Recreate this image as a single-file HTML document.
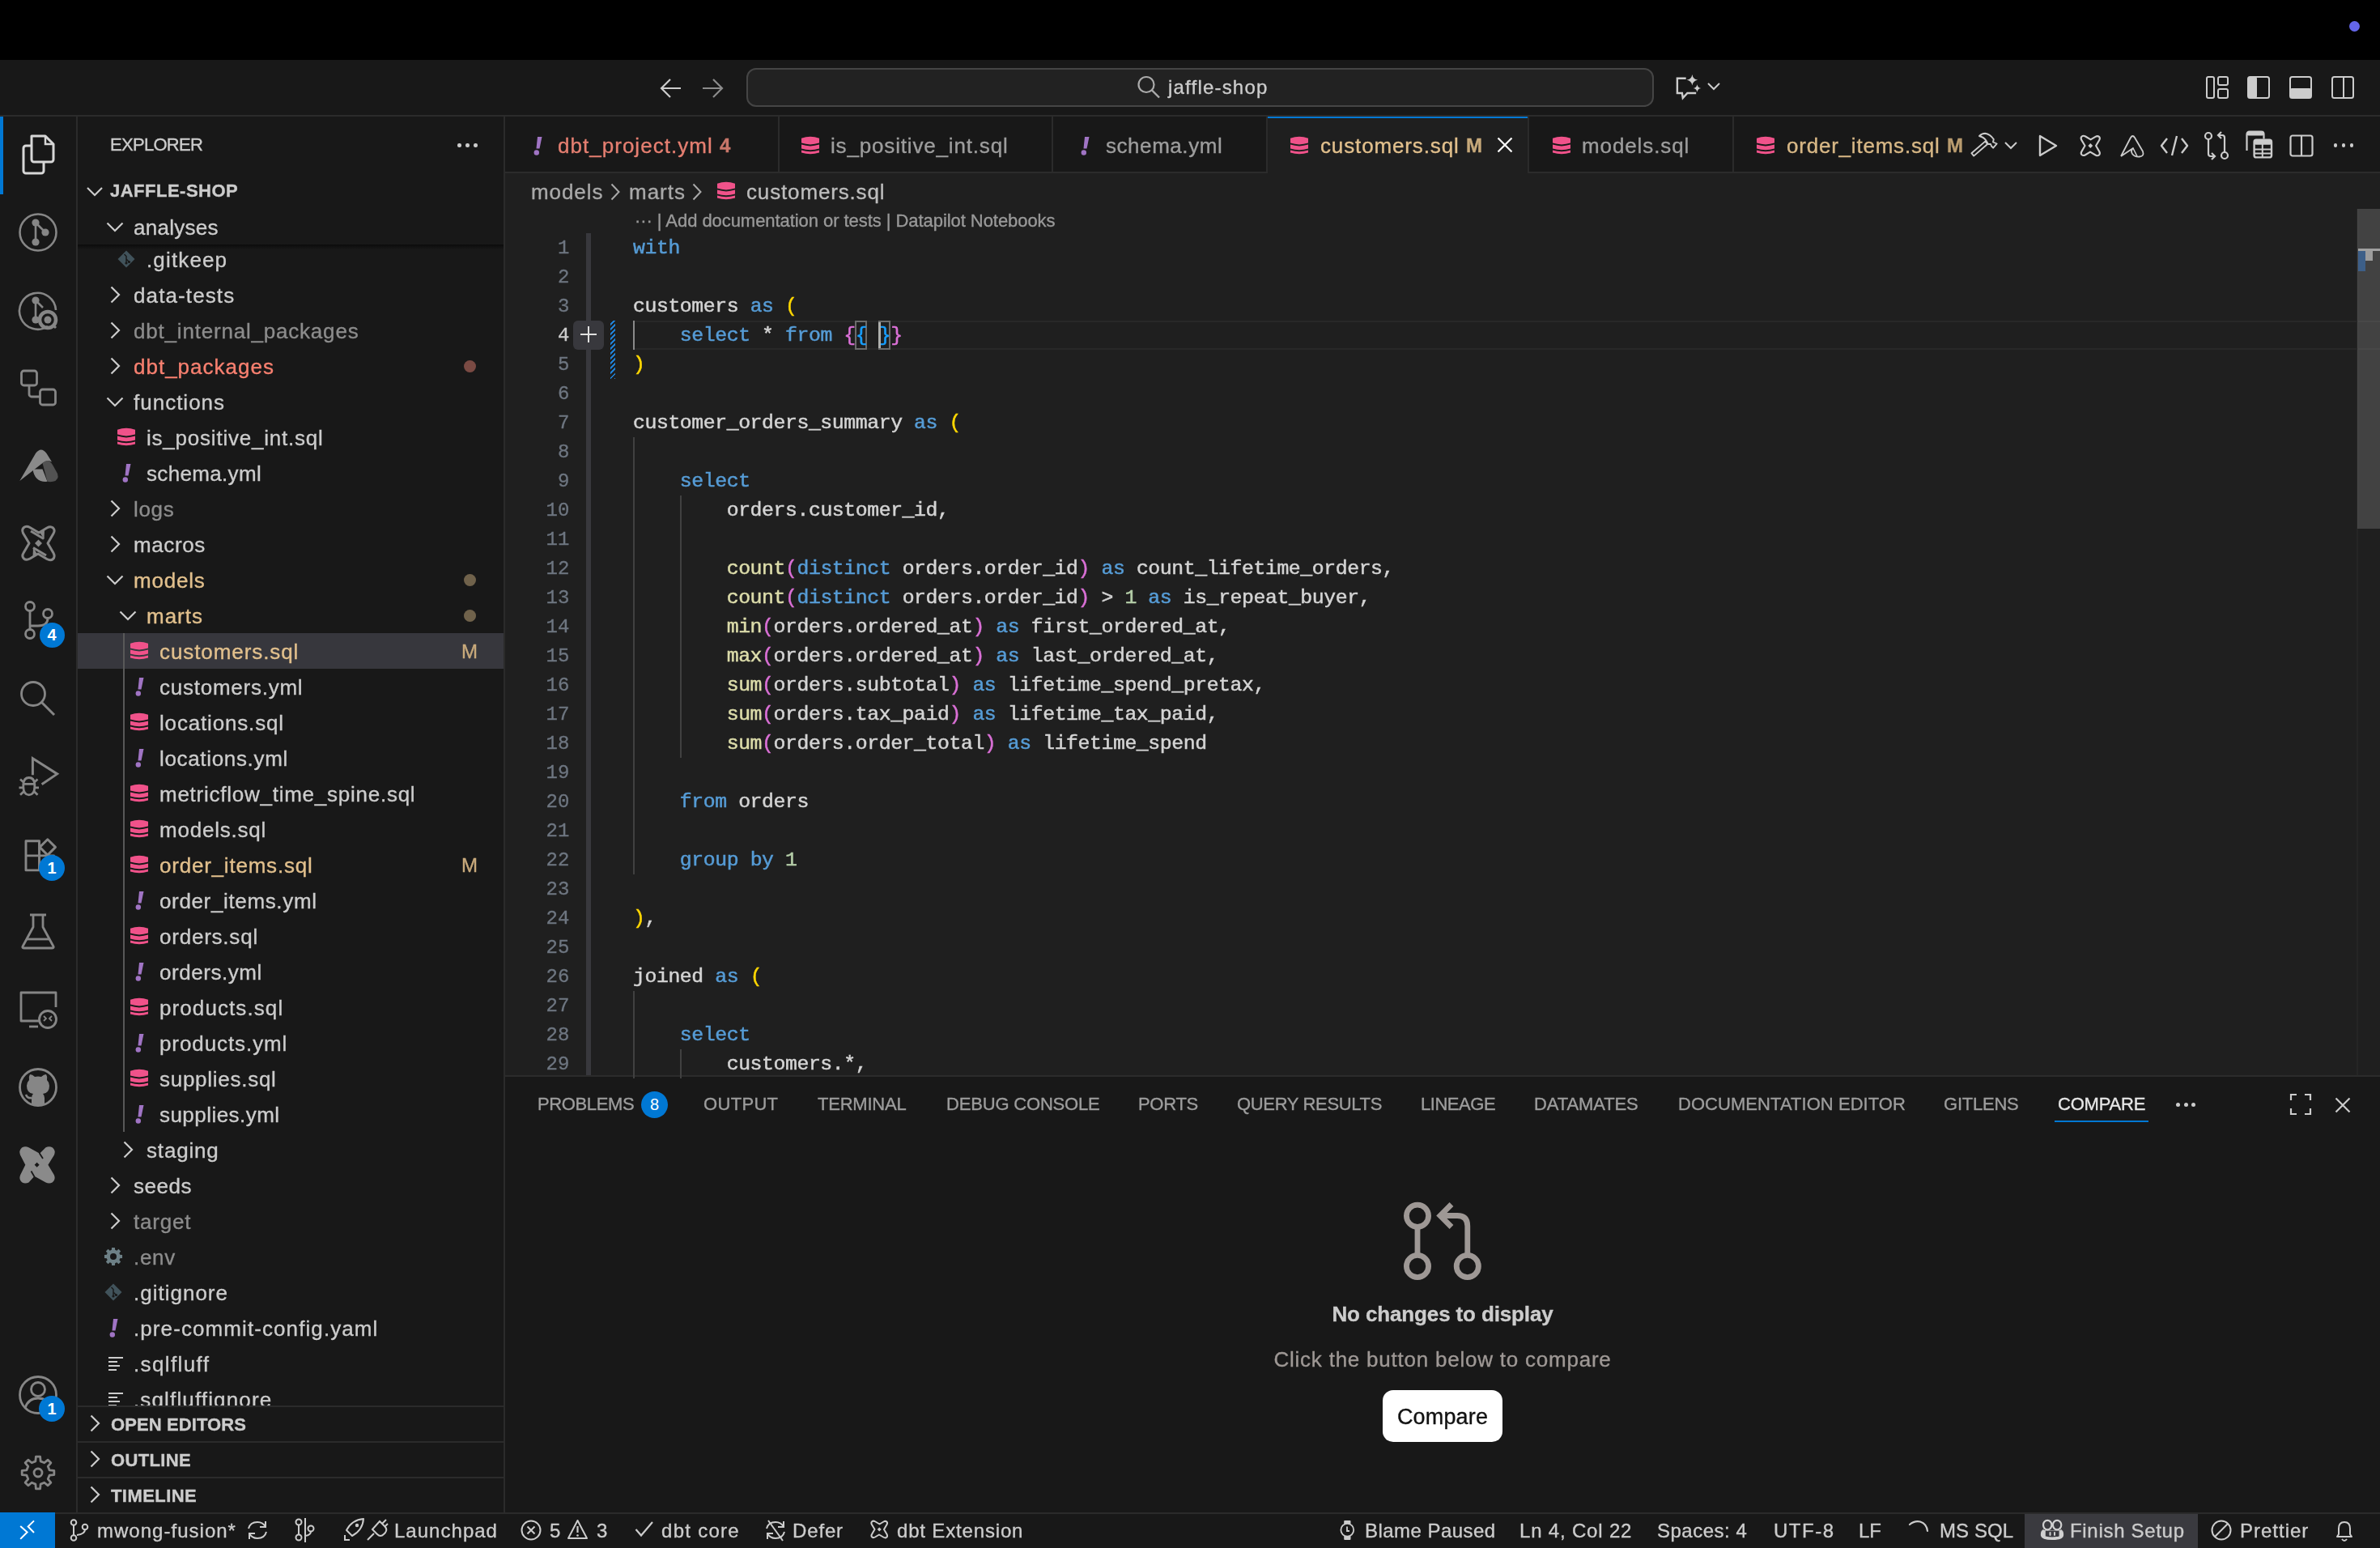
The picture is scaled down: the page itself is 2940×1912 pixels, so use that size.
<!DOCTYPE html>
<html><head><meta charset="utf-8"><style>
html,body{margin:0;padding:0;}
body{width:2940px;height:1912px;overflow:hidden;background:#181818;position:relative;font-family:"Liberation Sans",sans-serif;}
.a{position:absolute;}
.t{white-space:pre;-webkit-text-stroke-width:0.35px;will-change:transform;}
svg{overflow:visible;}
@media (max-width:2200px){html{zoom:0.5;}}
</style></head><body>
<div class="a" style="left:0px;top:0px;width:2940px;height:74px;background:#000000;"></div>
<div class="a" style="left:2901.5px;top:25.5px;width:13px;height:13px;border-radius:50%;background:#6466ea"></div>
<div class="a" style="left:0px;top:74px;width:2940px;height:68px;background:#181818;"></div>
<div class="a" style="left:0px;top:142px;width:2940px;height:2px;background:#2b2b2b;"></div>
<div class="a" style="left:0px;top:144px;width:94px;height:1724px;background:#181818;"></div>
<div class="a" style="left:94px;top:144px;width:2px;height:1724px;background:#2b2b2b;"></div>
<div class="a" style="left:0px;top:144px;width:4px;height:96px;background:#0078d4;"></div>
<div class="a" style="left:96px;top:144px;width:526px;height:1724px;background:#181818;"></div>
<div class="a" style="left:622px;top:144px;width:2px;height:1724px;background:#2b2b2b;"></div>
<div class="a" style="left:624px;top:214px;width:2316px;height:1114px;background:#1f1f1f;"></div>
<div class="a" style="left:624px;top:144px;width:2316px;height:70px;background:#181818;"></div>
<div class="a" style="left:624px;top:212px;width:2316px;height:2px;background:#2b2b2b;"></div>
<div class="a" style="left:624px;top:1328px;width:2316px;height:2px;background:#2b2b2b;"></div>
<div class="a" style="left:624px;top:1330px;width:2316px;height:538px;background:#181818;"></div>
<div class="a" style="left:0px;top:1868px;width:2940px;height:2px;background:#2b2b2b;"></div>
<div class="a" style="left:0px;top:1870px;width:2940px;height:42px;background:#181818;"></div>
<svg class="a" style="left:814px;top:96px;" width="30" height="26" viewBox="0 0 30 26"><path d="M3 13 H27 M14 2 L3 13 L14 24" fill="none" stroke="#cccccc" stroke-width="2.2" stroke-linejoin="miter"/></svg>
<svg class="a" style="left:866px;top:96px;" width="30" height="26" viewBox="0 0 30 26"><path d="M2 13 H26 M15 2 L26 13 L15 24" fill="none" stroke="#8b8b8b" stroke-width="2.2"/></svg>
<div class="a" style="left:922px;top:84px;width:1117px;height:44px;border:2px solid #454545;border-radius:12px;background:#222222"></div>
<svg class="a" style="left:1404px;top:93px;" width="32" height="32" viewBox="0 0 32 32"><circle cx="12" cy="11.5" r="9.5" fill="none" stroke="#ababab" stroke-width="2.2"/><path d="M19 18.5 L28 27.5" stroke="#ababab" stroke-width="2.4"/></svg>
<div id="tc5840b3f" class="a t" style="left:1443px;top:88.00px;font-size:24px;line-height:40px;color:#cccccc;font-weight:normal;letter-spacing:1.200px;font-family:"Liberation Sans",sans-serif;">jaffle-shop</div>
<svg class="a" style="left:2068px;top:90px;" width="36" height="36" viewBox="0 0 36 36"><path d="M14.7 6.8 H3.9 V25 H9.9 L10.8 31 L16.4 25 H27.2" fill="none" stroke="#cccccc" stroke-width="2.4" stroke-linejoin="miter"/><path d="M22.4 2 Q23.3 7.9 29.2 8.8 Q23.3 9.7 22.4 15.6 Q21.5 9.7 15.6 8.8 Q21.5 7.9 22.4 2 Z" fill="#cccccc"/><path d="M28.5 14.2 Q29.1 18.4 33.3 19 Q29.1 19.6 28.5 23.8 Q27.9 19.6 23.7 19 Q27.9 18.4 28.5 14.2 Z" fill="#cccccc"/></svg>
<svg class="a" style="left:2108px;top:101px;" width="18" height="12" viewBox="0 0 18 12"><path d="M2 2 L9 9 L16 2" fill="none" stroke="#cccccc" stroke-width="2"/></svg>
<svg class="a" style="left:2725px;top:94px;" width="28" height="28" viewBox="0 0 28 28"><rect x="1" y="1" width="9" height="26" rx="2" fill="none" stroke="#cccccc" stroke-width="2"/><rect x="15" y="1" width="12" height="10" rx="2" fill="none" stroke="#cccccc" stroke-width="2"/><rect x="15" y="16" width="12" height="11" rx="2" fill="none" stroke="#cccccc" stroke-width="2"/></svg>
<svg class="a" style="left:2776px;top:94px;" width="28" height="28" viewBox="0 0 28 28"><rect x="1" y="1" width="26" height="26" rx="2.5" fill="none" stroke="#cccccc" stroke-width="2"/><rect x="1" y="1" width="11" height="26" rx="2" fill="#cccccc"/></svg>
<svg class="a" style="left:2828px;top:94px;" width="28" height="28" viewBox="0 0 28 28"><rect x="1" y="1" width="26" height="26" rx="2.5" fill="none" stroke="#cccccc" stroke-width="2"/><rect x="1" y="15" width="26" height="12" rx="2" fill="#cccccc"/></svg>
<svg class="a" style="left:2880px;top:94px;" width="28" height="28" viewBox="0 0 28 28"><rect x="1" y="1" width="26" height="26" rx="2.5" fill="none" stroke="#cccccc" stroke-width="2"/><path d="M15 1 V27" stroke="#cccccc" stroke-width="2"/></svg>
<svg class="a" style="left:19px;top:163px;" width="56" height="56" viewBox="0 0 56 56"><path d="M20 5 H37 L47 15 V34 A3 3 0 0 1 44 37 H23 A3 3 0 0 1 20 34 Z" fill="none" stroke="#d7d7d7" stroke-width="3" stroke-linejoin="round"/><path d="M37 5 V15 H47" fill="none" stroke="#d7d7d7" stroke-width="2.5"/><path d="M20 17 H13 A3 3 0 0 0 10 20 V48 A3 3 0 0 0 13 51 H32 A3 3 0 0 0 35 48 V37" fill="none" stroke="#d7d7d7" stroke-width="3" stroke-linejoin="round"/></svg>
<svg class="a" style="left:19px;top:259px;" width="56" height="56" viewBox="0 0 56 56"><circle cx="28" cy="28" r="22.5" fill="none" stroke="#868686" stroke-width="2.6"/><path d="M25 16 V40 M25 16 L37 28" stroke="#868686" stroke-width="2.6"/><circle cx="25" cy="16" r="4.6" fill="#868686"/><circle cx="37" cy="28" r="4.6" fill="#868686"/><circle cx="25" cy="40" r="4.6" fill="#868686"/></svg>
<svg class="a" style="left:19px;top:355px;" width="56" height="56" viewBox="0 0 56 56"><path d="M40 48 A22.5 22.5 0 1 1 50 28" fill="none" stroke="#868686" stroke-width="2.6"/><path d="M25 16 V40 M25 16 L34 25" stroke="#868686" stroke-width="2.6"/><circle cx="25" cy="16" r="4.6" fill="#868686"/><circle cx="25" cy="40" r="4.6" fill="#868686"/><circle cx="40" cy="40" r="10" fill="none" stroke="#868686" stroke-width="4.5"/><circle cx="40" cy="40" r="4.5" fill="#868686"/><path d="M46 46 L50 50" stroke="#868686" stroke-width="3"/></svg>
<svg class="a" style="left:19px;top:451px;" width="56" height="56" viewBox="0 0 56 56"><rect x="7.5" y="7" width="19" height="18" rx="3" fill="none" stroke="#868686" stroke-width="2.8"/><rect x="30.5" y="30" width="19" height="19" rx="3" fill="none" stroke="#868686" stroke-width="2.8"/><path d="M17 25 V36 A3 3 0 0 0 20 39 H30.5" fill="none" stroke="#868686" stroke-width="2.8"/></svg>
<svg class="a" style="left:19px;top:547px;" width="56" height="56" viewBox="0 0 56 56"><path d="M5.3 47 L25 13 Q31.7 4 38.5 13 L45 23.5 Q39 20.5 33.5 25 Z" fill="#8a8a8a"/><path d="M21.5 32.5 H33.5 L39.5 47.8 Q31 48.5 26.5 44 Q22.5 40 21.5 32.5 Z" fill="#8a8a8a"/><path d="M33.5 25 Q38 20.5 42.5 23 Q44.5 24.5 46.5 28 L52 38 Q54.5 46 46.5 47.8 Q43 48.5 39.5 47.8 Z" fill="#525252"/></svg>
<svg class="a" style="left:19px;top:643px;" width="56" height="56" viewBox="0 0 56 56"><path d="M17 28 L9.5 15.5 Q7.5 11 10.5 8.5 Q13.5 6 18 8.5 L29 15 L39 9 Q43.5 6.5 46.5 9 Q49.5 12 47 16 L40 28 L47 40 Q49.5 44.5 46.5 47.5 Q43.5 50 39 47.5 L28 41 L18 47 Q13.5 49.5 10.5 47 Q7.5 44 10 40 Z" fill="none" stroke="#868686" stroke-width="3" stroke-linejoin="round"/><path d="M19 13 L35 22.5" stroke="#868686" stroke-width="3"/><path d="M30 14.5 L36 11.5 L35.5 23 Z" fill="#868686"/><path d="M22 33.5 L38 43" stroke="#868686" stroke-width="3"/><path d="M22 33 L21.5 44.5 L27 41.5 Z" fill="#868686"/><path d="M28.5 23.5 L33 28 L28.5 32.5 L24 28 Z" fill="#868686"/></svg>
<svg class="a" style="left:19px;top:739px;" width="56" height="56" viewBox="0 0 56 56"><circle cx="18" cy="10" r="5.5" fill="none" stroke="#868686" stroke-width="2.8"/><circle cx="18" cy="44" r="5.5" fill="none" stroke="#868686" stroke-width="2.8"/><circle cx="40" cy="19" r="5.5" fill="none" stroke="#868686" stroke-width="2.8"/><path d="M18 15.5 V38.5 M40 24.5 Q40 34 28 34 H18" fill="none" stroke="#868686" stroke-width="2.8"/></svg>
<div class="a" style="left:48.5px;top:768.5px;width:31px;height:31px;border-radius:50%;background:#0078d4;color:#fff;font:bold 20px/31px 'Liberation Sans',sans-serif;text-align:center">4</div>
<svg class="a" style="left:19px;top:835px;" width="56" height="56" viewBox="0 0 56 56"><circle cx="22" cy="22" r="14.5" fill="none" stroke="#868686" stroke-width="2.8"/><path d="M32.5 32.5 L48 48" stroke="#868686" stroke-width="3"/></svg>
<svg class="a" style="left:19px;top:931px;" width="56" height="56" viewBox="0 0 56 56"><path d="M32.6 37.7 L51.6 24.9 L21.4 5.7 V26.2" fill="none" stroke="#868686" stroke-width="3"/><path d="M9.8 37.5 Q10.5 29.5 16.8 29.5 Q23.1 29.5 23.8 37.5 V41 Q23.5 50.8 16.8 50.8 Q10.1 50.8 9.8 41 Z M9.8 37.3 H23.8" fill="none" stroke="#868686" stroke-width="2.8" stroke-linejoin="round"/><path d="M4.5 41.9 H9.6 M24 41.9 H29 M10.5 35.5 L6 31.5 M23 35.5 L27.5 31.5 M10.5 46.5 L6 50.8 M23 46.5 L27.5 50.8" stroke="#868686" stroke-width="2.8"/></svg>
<svg class="a" style="left:19px;top:1027px;" width="56" height="56" viewBox="0 0 56 56"><path d="M13 11.7 H29.5 V47.9 H13 Z M13 29.9 H47.5 V47.9 H29.5" fill="none" stroke="#868686" stroke-width="2.9" stroke-linejoin="round"/><path d="M39.8 9.7 L49.5 19.4 L39.8 29.1 L30.1 19.4 Z" fill="none" stroke="#868686" stroke-width="2.9" stroke-linejoin="round"/></svg>
<div class="a" style="left:48px;top:1056px;width:32px;height:32px;border-radius:50%;background:#0078d4;color:#fff;font:bold 20px/32px 'Liberation Sans',sans-serif;text-align:center">1</div>
<svg class="a" style="left:19px;top:1123px;" width="56" height="56" viewBox="0 0 56 56"><path d="M18 7 H38 M22 7 V22 L9 46 Q8 48 11 48 H45 Q48 48 47 46 L34 22 V7" fill="none" stroke="#868686" stroke-width="2.8" stroke-linejoin="round"/><path d="M14 37 H42" stroke="#868686" stroke-width="2.8"/></svg>
<svg class="a" style="left:19px;top:1219px;" width="56" height="56" viewBox="0 0 56 56"><path d="M30 42 H7 V7 H50 V25" fill="none" stroke="#868686" stroke-width="2.8" stroke-linejoin="round"/><path d="M17 49 H28" stroke="#868686" stroke-width="2.8"/><circle cx="40" cy="40" r="10.5" fill="none" stroke="#868686" stroke-width="2.8"/><path d="M35 36 L38 39 L35 42 M45 36 L42 39 L45 42" fill="none" stroke="#868686" stroke-width="1.8"/></svg>
<svg class="a" style="left:19px;top:1315px;" width="56" height="56" viewBox="0 0 56 56"><circle cx="28" cy="28" r="22.5" fill="none" stroke="#868686" stroke-width="2.8"/><path d="M20 49 V41 Q20 38 22 36 Q14 35 14 26 Q14 22 17 19 Q16 15 18 12 Q21 12 24 15 Q28 14 32 15 Q35 12 38 12 Q40 15 39 19 Q42 22 42 26 Q42 35 34 36 Q36 38 36 41 V49 Z" fill="#868686"/><path d="M20 41 Q15 42 13 37" fill="none" stroke="#868686" stroke-width="2.6"/></svg>
<svg class="a" style="left:19px;top:1411px;" width="56" height="56" viewBox="0 0 56 56"><path d="M12.3 27.8 L6 15.5 Q4 10 8 6.5 Q12 4 16.5 6.2 L30 13.8 L37.5 6.2 Q42 4 46 6.5 Q50 10 48 15.5 L40.4 27.8 L48 40.5 Q50 46 46 49.2 Q42 51.8 37.5 49.5 L23.5 41.8 L16.5 49.5 Q12 51.8 8 49.2 Q4 46 6 40.5 Z" fill="#8a8a8a"/><path d="M29.5 13 L34 20 M23.5 42.5 L19.5 35.5" stroke="#181818" stroke-width="1.8"/><path d="M26.6 24.8 L29.6 27.8 L26.6 30.8 L23.6 27.8 Z" fill="#181818"/></svg>
<svg class="a" style="left:19px;top:1695px;" width="56" height="56" viewBox="0 0 56 56"><circle cx="28" cy="28" r="22.5" fill="none" stroke="#868686" stroke-width="2.8"/><circle cx="28" cy="21" r="8.5" fill="none" stroke="#868686" stroke-width="2.8"/><path d="M12 44 Q16 32 28 32 Q40 32 44 44" fill="none" stroke="#868686" stroke-width="2.8"/></svg>
<div class="a" style="left:48px;top:1724px;width:32px;height:32px;border-radius:50%;background:#0078d4;color:#fff;font:bold 20px/32px 'Liberation Sans',sans-serif;text-align:center">1</div>
<svg class="a" style="left:19px;top:1791px;" width="56" height="56" viewBox="0 0 56 56"><path d="M42.15 24.84 L47.83 25.41 L47.83 30.59 L42.15 31.16 L40.24 35.77 L43.86 40.19 L40.19 43.86 L35.77 40.24 L31.16 42.15 L30.59 47.83 L25.41 47.83 L24.84 42.15 L20.23 40.24 L15.81 43.86 L12.14 40.19 L15.76 35.77 L13.85 31.16 L8.17 30.59 L8.17 25.41 L13.85 24.84 L15.76 20.23 L12.14 15.81 L15.81 12.14 L20.23 15.76 L24.84 13.85 L25.41 8.17 L30.59 8.17 L31.16 13.85 L35.77 15.76 L40.19 12.14 L43.86 15.81 L40.24 20.23 Z" fill="none" stroke="#868686" stroke-width="2.8" stroke-linejoin="round"/><circle cx="28" cy="28" r="5" fill="none" stroke="#868686" stroke-width="2.8"/></svg>
<div id="t4f3b7752" class="a t" style="left:136px;top:159.00px;font-size:22px;line-height:40px;color:#cccccc;font-weight:normal;letter-spacing:-0.714px;font-family:"Liberation Sans",sans-serif;">EXPLORER</div>
<div class="a" style="left:565px;top:177px;width:4.5px;height:4.5px;border-radius:50%;background:#cccccc"></div>
<div class="a" style="left:575px;top:177px;width:4.5px;height:4.5px;border-radius:50%;background:#cccccc"></div>
<div class="a" style="left:585px;top:177px;width:4.5px;height:4.5px;border-radius:50%;background:#cccccc"></div>
<svg class="a" style="left:106px;top:230px;" width="22" height="14" viewBox="0 0 22 14"><path d="M2 2 L11 11 L20 2" fill="none" stroke="#cccccc" stroke-width="2.2"/></svg>
<div id="tdb640ee2" class="a t" style="left:136px;top:216.00px;font-size:22px;line-height:40px;color:#cccccc;font-weight:bold;letter-spacing:0.500px;font-family:"Liberation Sans",sans-serif;">JAFFLE-SHOP</div>
<div class="a" style="left:96px;top:258px;width:526px;height:44px;background:#181818;"></div>
<div class="a" style="left:96px;top:782px;width:526px;height:44px;background:#37373d;"></div>
<div class="a" style="left:152px;top:782px;width:2px;height:616px;background:#585858;"></div>
<svg class="a" style="left:145px;top:309px;" width="22" height="22" viewBox="0 0 22 22"><path d="M11 0.5 L21.5 11 L11 21.5 L0.5 11 Z" fill="#41535b"/><path d="M8.5 5 L11 7.5 V16 M11 11 L14.5 14.5" stroke="#181818" stroke-width="1.4" fill="none"/><circle cx="11" cy="16" r="1.6" fill="#181818"/><circle cx="14.5" cy="14.5" r="1.6" fill="#181818"/></svg>
<div id="t702730bd" class="a t" style="left:181px;top:299.00px;font-size:26px;line-height:44px;color:#cccccc;font-weight:normal;letter-spacing:1.143px;font-family:"Liberation Sans",sans-serif;">.gitkeep</div>
<svg class="a" style="left:135px;top:353px;" width="14" height="22" viewBox="0 0 14 22"><path d="M2.5 1.5 L12 11 L2.5 20.5" fill="none" stroke="#cccccc" stroke-width="2.2"/></svg>
<div id="te911ee15" class="a t" style="left:164.6px;top:343.00px;font-size:26px;line-height:44px;color:#cccccc;font-weight:normal;letter-spacing:1.111px;font-family:"Liberation Sans",sans-serif;">data-tests</div>
<svg class="a" style="left:135px;top:397px;" width="14" height="22" viewBox="0 0 14 22"><path d="M2.5 1.5 L12 11 L2.5 20.5" fill="none" stroke="#cccccc" stroke-width="2.2"/></svg>
<div id="t50dd4df8" class="a t" style="left:164.6px;top:387.00px;font-size:26px;line-height:44px;color:#8c8c8c;font-weight:normal;letter-spacing:0.800px;font-family:"Liberation Sans",sans-serif;">dbt_internal_packages</div>
<svg class="a" style="left:135px;top:441px;" width="14" height="22" viewBox="0 0 14 22"><path d="M2.5 1.5 L12 11 L2.5 20.5" fill="none" stroke="#cccccc" stroke-width="2.2"/></svg>
<div id="t209a0e7f" class="a t" style="left:164.6px;top:431.00px;font-size:26px;line-height:44px;color:#f88070;font-weight:normal;letter-spacing:1.000px;font-family:"Liberation Sans",sans-serif;">dbt_packages</div>
<div class="a" style="left:572.5px;top:444.5px;width:15px;height:15px;border-radius:50%;background:#7a4a43"></div>
<svg class="a" style="left:131px;top:489px;" width="22" height="14" viewBox="0 0 22 14"><path d="M1.5 2.5 L11 12 L20.5 2.5" fill="none" stroke="#cccccc" stroke-width="2.2"/></svg>
<div id="t82731efe" class="a t" style="left:164.6px;top:475.00px;font-size:26px;line-height:44px;color:#cccccc;font-weight:normal;letter-spacing:1.000px;font-family:"Liberation Sans",sans-serif;">functions</div>
<svg class="a" style="left:145px;top:528px;" width="22" height="24" viewBox="0 0 22 24"><g fill="#f0528a"><path d="M0 2.8 Q11 -1.2 22 2.8 V8.6 Q11 12.2 0 8.6 Z"/><path d="M0 10.6 Q11 14.2 22 10.6 V15.4 Q11 19 0 15.4 Z"/><path d="M0 17.4 Q11 21 22 17.4 V20.6 Q11 24 0 20.6 Z"/></g></svg>
<div id="ta8964c74" class="a t" style="left:180.6px;top:519.00px;font-size:26px;line-height:44px;color:#cccccc;font-weight:normal;letter-spacing:0.779px;font-family:"Liberation Sans",sans-serif;">is_positive_int.sql</div>
<svg class="a" style="left:150px;top:572px;" width="12" height="24" viewBox="0 0 12 24"><path d="M6 1 H11.5 L8.5 15.5 H4.5 Z" fill="#a074c4"/><circle cx="4.8" cy="20.5" r="3.2" fill="#a074c4"/></svg>
<div id="tdbcc5fa7" class="a t" style="left:180.6px;top:563.00px;font-size:26px;line-height:44px;color:#cccccc;font-weight:normal;letter-spacing:0.335px;font-family:"Liberation Sans",sans-serif;">schema.yml</div>
<svg class="a" style="left:135px;top:617px;" width="14" height="22" viewBox="0 0 14 22"><path d="M2.5 1.5 L12 11 L2.5 20.5" fill="none" stroke="#cccccc" stroke-width="2.2"/></svg>
<div id="t31d4ef1e" class="a t" style="left:164.6px;top:607.00px;font-size:26px;line-height:44px;color:#8c8c8c;font-weight:normal;letter-spacing:0.668px;font-family:"Liberation Sans",sans-serif;">logs</div>
<svg class="a" style="left:135px;top:661px;" width="14" height="22" viewBox="0 0 14 22"><path d="M2.5 1.5 L12 11 L2.5 20.5" fill="none" stroke="#cccccc" stroke-width="2.2"/></svg>
<div id="t34041583" class="a t" style="left:164.6px;top:651.00px;font-size:26px;line-height:44px;color:#cccccc;font-weight:normal;letter-spacing:0.600px;font-family:"Liberation Sans",sans-serif;">macros</div>
<svg class="a" style="left:131px;top:709px;" width="22" height="14" viewBox="0 0 22 14"><path d="M1.5 2.5 L11 12 L20.5 2.5" fill="none" stroke="#cccccc" stroke-width="2.2"/></svg>
<div id="tb1e614e0" class="a t" style="left:164.6px;top:695.00px;font-size:26px;line-height:44px;color:#e2c08d;font-weight:normal;letter-spacing:0.800px;font-family:"Liberation Sans",sans-serif;">models</div>
<div class="a" style="left:572.5px;top:708.5px;width:15px;height:15px;border-radius:50%;background:#70624b"></div>
<svg class="a" style="left:147px;top:753px;" width="22" height="14" viewBox="0 0 22 14"><path d="M1.5 2.5 L11 12 L20.5 2.5" fill="none" stroke="#cccccc" stroke-width="2.2"/></svg>
<div id="tbe3b2e84" class="a t" style="left:180.6px;top:739.00px;font-size:26px;line-height:44px;color:#e2c08d;font-weight:normal;letter-spacing:1.000px;font-family:"Liberation Sans",sans-serif;">marts</div>
<div class="a" style="left:572.5px;top:752.5px;width:15px;height:15px;border-radius:50%;background:#70624b"></div>
<svg class="a" style="left:161px;top:792px;" width="22" height="24" viewBox="0 0 22 24"><g fill="#f0528a"><path d="M0 2.8 Q11 -1.2 22 2.8 V8.6 Q11 12.2 0 8.6 Z"/><path d="M0 10.6 Q11 14.2 22 10.6 V15.4 Q11 19 0 15.4 Z"/><path d="M0 17.4 Q11 21 22 17.4 V20.6 Q11 24 0 20.6 Z"/></g></svg>
<div id="t6036e098" class="a t" style="left:196.6px;top:783.00px;font-size:26px;line-height:44px;color:#e2c08d;font-weight:normal;letter-spacing:0.916px;font-family:"Liberation Sans",sans-serif;">customers.sql</div>
<div id="tbe29cebc" class="a t" style="left:570px;top:783.00px;font-size:24px;line-height:44px;color:#c9aa7c;font-weight:normal;letter-spacing:0.000px;font-family:"Liberation Sans",sans-serif;">M</div>
<svg class="a" style="left:166px;top:836px;" width="12" height="24" viewBox="0 0 12 24"><path d="M6 1 H11.5 L8.5 15.5 H4.5 Z" fill="#a074c4"/><circle cx="4.8" cy="20.5" r="3.2" fill="#a074c4"/></svg>
<div id="t1f41c439" class="a t" style="left:196.6px;top:827.00px;font-size:26px;line-height:44px;color:#cccccc;font-weight:normal;letter-spacing:0.750px;font-family:"Liberation Sans",sans-serif;">customers.yml</div>
<svg class="a" style="left:161px;top:880px;" width="22" height="24" viewBox="0 0 22 24"><g fill="#f0528a"><path d="M0 2.8 Q11 -1.2 22 2.8 V8.6 Q11 12.2 0 8.6 Z"/><path d="M0 10.6 Q11 14.2 22 10.6 V15.4 Q11 19 0 15.4 Z"/><path d="M0 17.4 Q11 21 22 17.4 V20.6 Q11 24 0 20.6 Z"/></g></svg>
<div id="t8bfe27b3" class="a t" style="left:196.6px;top:871.00px;font-size:26px;line-height:44px;color:#cccccc;font-weight:normal;letter-spacing:0.833px;font-family:"Liberation Sans",sans-serif;">locations.sql</div>
<svg class="a" style="left:166px;top:924px;" width="12" height="24" viewBox="0 0 12 24"><path d="M6 1 H11.5 L8.5 15.5 H4.5 Z" fill="#a074c4"/><circle cx="4.8" cy="20.5" r="3.2" fill="#a074c4"/></svg>
<div id="t028ab29e" class="a t" style="left:196.6px;top:915.00px;font-size:26px;line-height:44px;color:#cccccc;font-weight:normal;letter-spacing:0.667px;font-family:"Liberation Sans",sans-serif;">locations.yml</div>
<svg class="a" style="left:161px;top:968px;" width="22" height="24" viewBox="0 0 22 24"><g fill="#f0528a"><path d="M0 2.8 Q11 -1.2 22 2.8 V8.6 Q11 12.2 0 8.6 Z"/><path d="M0 10.6 Q11 14.2 22 10.6 V15.4 Q11 19 0 15.4 Z"/><path d="M0 17.4 Q11 21 22 17.4 V20.6 Q11 24 0 20.6 Z"/></g></svg>
<div id="t3fa2ac2e" class="a t" style="left:196.6px;top:959.00px;font-size:26px;line-height:44px;color:#cccccc;font-weight:normal;letter-spacing:0.749px;font-family:"Liberation Sans",sans-serif;">metricflow_time_spine.sql</div>
<svg class="a" style="left:161px;top:1012px;" width="22" height="24" viewBox="0 0 22 24"><g fill="#f0528a"><path d="M0 2.8 Q11 -1.2 22 2.8 V8.6 Q11 12.2 0 8.6 Z"/><path d="M0 10.6 Q11 14.2 22 10.6 V15.4 Q11 19 0 15.4 Z"/><path d="M0 17.4 Q11 21 22 17.4 V20.6 Q11 24 0 20.6 Z"/></g></svg>
<div id="t4dce6d8a" class="a t" style="left:196.6px;top:1003.00px;font-size:26px;line-height:44px;color:#cccccc;font-weight:normal;letter-spacing:0.775px;font-family:"Liberation Sans",sans-serif;">models.sql</div>
<svg class="a" style="left:161px;top:1056px;" width="22" height="24" viewBox="0 0 22 24"><g fill="#f0528a"><path d="M0 2.8 Q11 -1.2 22 2.8 V8.6 Q11 12.2 0 8.6 Z"/><path d="M0 10.6 Q11 14.2 22 10.6 V15.4 Q11 19 0 15.4 Z"/><path d="M0 17.4 Q11 21 22 17.4 V20.6 Q11 24 0 20.6 Z"/></g></svg>
<div id="t51ba3015" class="a t" style="left:196.6px;top:1047.00px;font-size:26px;line-height:44px;color:#e2c08d;font-weight:normal;letter-spacing:0.784px;font-family:"Liberation Sans",sans-serif;">order_items.sql</div>
<div id="t0de13d81" class="a t" style="left:570px;top:1047.00px;font-size:24px;line-height:44px;color:#c9aa7c;font-weight:normal;letter-spacing:0.000px;font-family:"Liberation Sans",sans-serif;">M</div>
<svg class="a" style="left:166px;top:1100px;" width="12" height="24" viewBox="0 0 12 24"><path d="M6 1 H11.5 L8.5 15.5 H4.5 Z" fill="#a074c4"/><circle cx="4.8" cy="20.5" r="3.2" fill="#a074c4"/></svg>
<div id="tdb74f6c2" class="a t" style="left:196.6px;top:1091.00px;font-size:26px;line-height:44px;color:#cccccc;font-weight:normal;letter-spacing:0.645px;font-family:"Liberation Sans",sans-serif;">order_items.yml</div>
<svg class="a" style="left:161px;top:1144px;" width="22" height="24" viewBox="0 0 22 24"><g fill="#f0528a"><path d="M0 2.8 Q11 -1.2 22 2.8 V8.6 Q11 12.2 0 8.6 Z"/><path d="M0 10.6 Q11 14.2 22 10.6 V15.4 Q11 19 0 15.4 Z"/><path d="M0 17.4 Q11 21 22 17.4 V20.6 Q11 24 0 20.6 Z"/></g></svg>
<div id="t03d37e71" class="a t" style="left:196.6px;top:1135.00px;font-size:26px;line-height:44px;color:#cccccc;font-weight:normal;letter-spacing:0.779px;font-family:"Liberation Sans",sans-serif;">orders.sql</div>
<svg class="a" style="left:166px;top:1188px;" width="12" height="24" viewBox="0 0 12 24"><path d="M6 1 H11.5 L8.5 15.5 H4.5 Z" fill="#a074c4"/><circle cx="4.8" cy="20.5" r="3.2" fill="#a074c4"/></svg>
<div id="tb0c20f5b" class="a t" style="left:196.6px;top:1179.00px;font-size:26px;line-height:44px;color:#cccccc;font-weight:normal;letter-spacing:0.555px;font-family:"Liberation Sans",sans-serif;">orders.yml</div>
<svg class="a" style="left:161px;top:1232px;" width="22" height="24" viewBox="0 0 22 24"><g fill="#f0528a"><path d="M0 2.8 Q11 -1.2 22 2.8 V8.6 Q11 12.2 0 8.6 Z"/><path d="M0 10.6 Q11 14.2 22 10.6 V15.4 Q11 19 0 15.4 Z"/><path d="M0 17.4 Q11 21 22 17.4 V20.6 Q11 24 0 20.6 Z"/></g></svg>
<div id="ta683495a" class="a t" style="left:196.6px;top:1223.00px;font-size:26px;line-height:44px;color:#cccccc;font-weight:normal;letter-spacing:1.090px;font-family:"Liberation Sans",sans-serif;">products.sql</div>
<svg class="a" style="left:166px;top:1276px;" width="12" height="24" viewBox="0 0 12 24"><path d="M6 1 H11.5 L8.5 15.5 H4.5 Z" fill="#a074c4"/><circle cx="4.8" cy="20.5" r="3.2" fill="#a074c4"/></svg>
<div id="tedf8ff96" class="a t" style="left:196.6px;top:1267.00px;font-size:26px;line-height:44px;color:#cccccc;font-weight:normal;letter-spacing:0.909px;font-family:"Liberation Sans",sans-serif;">products.yml</div>
<svg class="a" style="left:161px;top:1320px;" width="22" height="24" viewBox="0 0 22 24"><g fill="#f0528a"><path d="M0 2.8 Q11 -1.2 22 2.8 V8.6 Q11 12.2 0 8.6 Z"/><path d="M0 10.6 Q11 14.2 22 10.6 V15.4 Q11 19 0 15.4 Z"/><path d="M0 17.4 Q11 21 22 17.4 V20.6 Q11 24 0 20.6 Z"/></g></svg>
<div id="tc23c874a" class="a t" style="left:196.6px;top:1311.00px;font-size:26px;line-height:44px;color:#cccccc;font-weight:normal;letter-spacing:0.727px;font-family:"Liberation Sans",sans-serif;">supplies.sql</div>
<svg class="a" style="left:166px;top:1364px;" width="12" height="24" viewBox="0 0 12 24"><path d="M6 1 H11.5 L8.5 15.5 H4.5 Z" fill="#a074c4"/><circle cx="4.8" cy="20.5" r="3.2" fill="#a074c4"/></svg>
<div id="t0376e6ad" class="a t" style="left:196.6px;top:1355.00px;font-size:26px;line-height:44px;color:#cccccc;font-weight:normal;letter-spacing:0.454px;font-family:"Liberation Sans",sans-serif;">supplies.yml</div>
<svg class="a" style="left:151px;top:1409px;" width="14" height="22" viewBox="0 0 14 22"><path d="M2.5 1.5 L12 11 L2.5 20.5" fill="none" stroke="#cccccc" stroke-width="2.2"/></svg>
<div id="t31a6ada5" class="a t" style="left:180.6px;top:1399.00px;font-size:26px;line-height:44px;color:#cccccc;font-weight:normal;letter-spacing:0.831px;font-family:"Liberation Sans",sans-serif;">staging</div>
<svg class="a" style="left:135px;top:1453px;" width="14" height="22" viewBox="0 0 14 22"><path d="M2.5 1.5 L12 11 L2.5 20.5" fill="none" stroke="#cccccc" stroke-width="2.2"/></svg>
<div id="te734d14f" class="a t" style="left:164.6px;top:1443.00px;font-size:26px;line-height:44px;color:#cccccc;font-weight:normal;letter-spacing:0.500px;font-family:"Liberation Sans",sans-serif;">seeds</div>
<svg class="a" style="left:135px;top:1497px;" width="14" height="22" viewBox="0 0 14 22"><path d="M2.5 1.5 L12 11 L2.5 20.5" fill="none" stroke="#cccccc" stroke-width="2.2"/></svg>
<div id="t96a90f75" class="a t" style="left:164.6px;top:1487.00px;font-size:26px;line-height:44px;color:#8c8c8c;font-weight:normal;letter-spacing:0.800px;font-family:"Liberation Sans",sans-serif;">target</div>
<svg class="a" style="left:129px;top:1541px;" width="22" height="22" viewBox="0 0 22 22"><path d="M19.21 8.81 L22.04 9.11 L22.04 12.89 L19.21 13.19 L18.35 15.26 L20.15 17.47 L17.47 20.15 L15.26 18.35 L13.19 19.21 L12.89 22.04 L9.11 22.04 L8.81 19.21 L6.74 18.35 L4.53 20.15 L1.85 17.47 L3.65 15.26 L2.79 13.19 L-0.04 12.89 L-0.04 9.11 L2.79 8.81 L3.65 6.74 L1.85 4.53 L4.53 1.85 L6.74 3.65 L8.81 2.79 L9.11 -0.04 L12.89 -0.04 L13.19 2.79 L15.26 3.65 L17.47 1.85 L20.15 4.53 L18.35 6.74 Z" fill="#6d8086"/><circle cx="11" cy="11" r="4" fill="#181818"/></svg>
<div id="t1921da4d" class="a t" style="left:164.6px;top:1531.00px;font-size:26px;line-height:44px;color:#8c8c8c;font-weight:normal;letter-spacing:0.666px;font-family:"Liberation Sans",sans-serif;">.env</div>
<svg class="a" style="left:129px;top:1585px;" width="22" height="22" viewBox="0 0 22 22"><path d="M11 0.5 L21.5 11 L11 21.5 L0.5 11 Z" fill="#41535b"/><path d="M8.5 5 L11 7.5 V16 M11 11 L14.5 14.5" stroke="#181818" stroke-width="1.4" fill="none"/><circle cx="11" cy="16" r="1.6" fill="#181818"/><circle cx="14.5" cy="14.5" r="1.6" fill="#181818"/></svg>
<div id="t97ef4156" class="a t" style="left:164.6px;top:1575.00px;font-size:26px;line-height:44px;color:#cccccc;font-weight:normal;letter-spacing:1.002px;font-family:"Liberation Sans",sans-serif;">.gitignore</div>
<svg class="a" style="left:134px;top:1628px;" width="12" height="24" viewBox="0 0 12 24"><path d="M6 1 H11.5 L8.5 15.5 H4.5 Z" fill="#a074c4"/><circle cx="4.8" cy="20.5" r="3.2" fill="#a074c4"/></svg>
<div id="t50bafa56" class="a t" style="left:164.6px;top:1619.00px;font-size:26px;line-height:44px;color:#cccccc;font-weight:normal;letter-spacing:1.090px;font-family:"Liberation Sans",sans-serif;">.pre-commit-config.yaml</div>
<svg class="a" style="left:134px;top:1675px;" width="18" height="18" viewBox="0 0 18 18"><path d="M0 2 H18 M0 7 H11 M0 12 H14 M0 17 H10" stroke="#cccccc" stroke-width="2.2"/></svg>
<div id="te2a67f60" class="a t" style="left:164.6px;top:1663.00px;font-size:26px;line-height:44px;color:#cccccc;font-weight:normal;letter-spacing:1.375px;font-family:"Liberation Sans",sans-serif;">.sqlfluff</div>
<svg class="a" style="left:134px;top:1719px;" width="18" height="18" viewBox="0 0 18 18"><path d="M0 2 H18 M0 7 H11 M0 12 H14 M0 17 H10" stroke="#cccccc" stroke-width="2.2"/></svg>
<div id="t9fc2bc03" class="a t" style="left:164.6px;top:1707.00px;font-size:26px;line-height:44px;color:#cccccc;font-weight:normal;letter-spacing:1.144px;font-family:"Liberation Sans",sans-serif;">.sqlfluffignore</div>
<div class="a" style="left:96px;top:258px;width:526px;height:44px;background:#181818;"></div>
<svg class="a" style="left:131px;top:273px;" width="22" height="14" viewBox="0 0 22 14"><path d="M1.5 2.5 L11 12 L20.5 2.5" fill="none" stroke="#cccccc" stroke-width="2.2"/></svg>
<div id="t511ed27e" class="a t" style="left:164.6px;top:259.00px;font-size:26px;line-height:44px;color:#cccccc;font-weight:normal;letter-spacing:0.284px;font-family:"Liberation Sans",sans-serif;">analyses</div>
<div class="a" style="left:96px;top:302px;width:526px;height:6px;background:linear-gradient(#0b0b0b,rgba(0,0,0,0))"></div>
<div class="a" style="left:96px;top:1736px;width:526px;height:132px;background:#181818;"></div>
<div class="a" style="left:96px;top:1736px;width:526px;height:2px;background:#2b2b2b;"></div>
<svg class="a" style="left:110px;top:1747px;" width="14" height="22" viewBox="0 0 14 22"><path d="M2.5 1.5 L12 11 L2.5 20.5" fill="none" stroke="#cccccc" stroke-width="2.2"/></svg>
<div id="tebcd518b" class="a t" style="left:136.8px;top:1739.50px;font-size:22px;line-height:40px;color:#cccccc;font-weight:bold;letter-spacing:0.094px;font-family:"Liberation Sans",sans-serif;">OPEN EDITORS</div>
<div class="a" style="left:96px;top:1780px;width:526px;height:2px;background:#2b2b2b;"></div>
<svg class="a" style="left:110px;top:1791px;" width="14" height="22" viewBox="0 0 14 22"><path d="M2.5 1.5 L12 11 L2.5 20.5" fill="none" stroke="#cccccc" stroke-width="2.2"/></svg>
<div id="t418241d1" class="a t" style="left:136.8px;top:1783.50px;font-size:22px;line-height:40px;color:#cccccc;font-weight:bold;letter-spacing:0.334px;font-family:"Liberation Sans",sans-serif;">OUTLINE</div>
<div class="a" style="left:96px;top:1824px;width:526px;height:2px;background:#2b2b2b;"></div>
<svg class="a" style="left:110px;top:1835px;" width="14" height="22" viewBox="0 0 14 22"><path d="M2.5 1.5 L12 11 L2.5 20.5" fill="none" stroke="#cccccc" stroke-width="2.2"/></svg>
<div id="t8aeb79b2" class="a t" style="left:136.8px;top:1827.50px;font-size:22px;line-height:40px;color:#cccccc;font-weight:bold;letter-spacing:0.429px;font-family:"Liberation Sans",sans-serif;">TIMELINE</div>
<div class="a" style="left:961px;top:144px;width:2px;height:68px;background:#2b2b2b;"></div>
<svg class="a" style="left:658px;top:168px;" width="12" height="24" viewBox="0 0 12 24"><path d="M6 1 H11.5 L8.5 15.5 H4.5 Z" fill="#a074c4"/><circle cx="4.8" cy="20.5" r="3.2" fill="#a074c4"/></svg>
<div id="t3f812b75" class="a t" style="left:688.6px;top:158.00px;font-size:26px;line-height:44px;color:#e57f71;font-weight:normal;letter-spacing:1.027px;font-family:"Liberation Sans",sans-serif;">dbt_project.yml</div>
<div id="tcea2a482" class="a t" style="left:888.7px;top:158.00px;font-size:24px;line-height:44px;color:#c8766a;font-weight:bold;letter-spacing:0.000px;font-family:"Liberation Sans",sans-serif;-webkit-text-stroke-width:0.2px;">4</div>
<div class="a" style="left:1299px;top:144px;width:2px;height:68px;background:#2b2b2b;"></div>
<svg class="a" style="left:990px;top:168px;" width="22" height="24" viewBox="0 0 22 24"><g fill="#f0528a"><path d="M0 2.8 Q11 -1.2 22 2.8 V8.6 Q11 12.2 0 8.6 Z"/><path d="M0 10.6 Q11 14.2 22 10.6 V15.4 Q11 19 0 15.4 Z"/><path d="M0 17.4 Q11 21 22 17.4 V20.6 Q11 24 0 20.6 Z"/></g></svg>
<div id="t7cc76834" class="a t" style="left:1026.1px;top:158.00px;font-size:26px;line-height:44px;color:#9d9d9d;font-weight:normal;letter-spacing:0.833px;font-family:"Liberation Sans",sans-serif;">is_positive_int.sql</div>
<div class="a" style="left:1564px;top:144px;width:2px;height:68px;background:#2b2b2b;"></div>
<svg class="a" style="left:1334px;top:168px;" width="12" height="24" viewBox="0 0 12 24"><path d="M6 1 H11.5 L8.5 15.5 H4.5 Z" fill="#a074c4"/><circle cx="4.8" cy="20.5" r="3.2" fill="#a074c4"/></svg>
<div id="t666f4574" class="a t" style="left:1365.6px;top:158.00px;font-size:26px;line-height:44px;color:#9d9d9d;font-weight:normal;letter-spacing:0.555px;font-family:"Liberation Sans",sans-serif;">schema.yml</div>
<div class="a" style="left:1566px;top:144px;width:321px;height:70px;background:#1f1f1f;"></div>
<div class="a" style="left:1566px;top:144px;width:321px;height:2px;background:#0078d4;"></div>
<div class="a" style="left:1887px;top:144px;width:2px;height:70px;background:#2b2b2b;"></div>
<svg class="a" style="left:1594px;top:168px;" width="22" height="24" viewBox="0 0 22 24"><g fill="#f0528a"><path d="M0 2.8 Q11 -1.2 22 2.8 V8.6 Q11 12.2 0 8.6 Z"/><path d="M0 10.6 Q11 14.2 22 10.6 V15.4 Q11 19 0 15.4 Z"/><path d="M0 17.4 Q11 21 22 17.4 V20.6 Q11 24 0 20.6 Z"/></g></svg>
<div id="teaf81962" class="a t" style="left:1630.6px;top:158.00px;font-size:26px;line-height:44px;color:#e2c08d;font-weight:normal;letter-spacing:0.866px;font-family:"Liberation Sans",sans-serif;">customers.sql</div>
<div id="tadcbf4c3" class="a t" style="left:1811px;top:158.00px;font-size:24px;line-height:44px;color:#c7a97a;font-weight:bold;letter-spacing:0.000px;font-family:"Liberation Sans",sans-serif;-webkit-text-stroke-width:0.2px;">M</div>
<div class="a" style="left:2140px;top:144px;width:2px;height:68px;background:#2b2b2b;"></div>
<svg class="a" style="left:1918px;top:168px;" width="22" height="24" viewBox="0 0 22 24"><g fill="#f0528a"><path d="M0 2.8 Q11 -1.2 22 2.8 V8.6 Q11 12.2 0 8.6 Z"/><path d="M0 10.6 Q11 14.2 22 10.6 V15.4 Q11 19 0 15.4 Z"/><path d="M0 17.4 Q11 21 22 17.4 V20.6 Q11 24 0 20.6 Z"/></g></svg>
<div id="t2bad72b8" class="a t" style="left:1953.6px;top:158.00px;font-size:26px;line-height:44px;color:#9d9d9d;font-weight:normal;letter-spacing:0.889px;font-family:"Liberation Sans",sans-serif;">models.sql</div>
<svg class="a" style="left:2170px;top:168px;" width="22" height="24" viewBox="0 0 22 24"><g fill="#f0528a"><path d="M0 2.8 Q11 -1.2 22 2.8 V8.6 Q11 12.2 0 8.6 Z"/><path d="M0 10.6 Q11 14.2 22 10.6 V15.4 Q11 19 0 15.4 Z"/><path d="M0 17.4 Q11 21 22 17.4 V20.6 Q11 24 0 20.6 Z"/></g></svg>
<div id="t547e6ede" class="a t" style="left:2206.6px;top:158.00px;font-size:26px;line-height:44px;color:#d8b886;font-weight:normal;letter-spacing:0.785px;font-family:"Liberation Sans",sans-serif;">order_items.sql</div>
<div id="t9bfc0a82" class="a t" style="left:2405px;top:158.00px;font-size:24px;line-height:44px;color:#b99c6f;font-weight:bold;letter-spacing:0.000px;font-family:"Liberation Sans",sans-serif;-webkit-text-stroke-width:0.2px;">M</div>
<svg class="a" style="left:1849px;top:169px;" width="20" height="20" viewBox="0 0 20 20"><path d="M1.5 1.5 L18.5 18.5 M18.5 1.5 L1.5 18.5" stroke="#ffffff" stroke-width="2.2"/></svg>
<div class="a" style="left:2428px;top:144px;width:512px;height:68px;background:#181818;"></div>
<svg class="a" style="left:2434px;top:162px;" width="36" height="36" viewBox="0 0 36 36"><path d="M1.4 27.2 L4.2 30.6 L21.1 16 L18.3 12.6 Z" fill="none" stroke="#cccccc" stroke-width="1.9" stroke-linejoin="round"/><path d="M11 6 Q14 2.8 18.2 2.8 Q24 3.5 28.8 10 L28 13.5 L32.7 15.5 L28.2 20.7 L26 18.5 L25 16 L22 16 L20.5 13.5 L18.8 10.8 Q17 8 11 6 Z" fill="none" stroke="#cccccc" stroke-width="1.9" stroke-linejoin="round"/></svg>
<svg class="a" style="left:2475px;top:174px;" width="18" height="12" viewBox="0 0 18 12"><path d="M2 2 L9 9 L16 2" fill="none" stroke="#cccccc" stroke-width="2"/></svg>
<svg class="a" style="left:2517px;top:165px;" width="26" height="30" viewBox="0 0 26 30"><path d="M3 3 L23 15 L3 27 Z" fill="none" stroke="#cccccc" stroke-width="2.4" stroke-linejoin="round"/></svg>
<svg class="a" style="left:2565px;top:163px;" width="34" height="34" viewBox="0 0 34 34"><g transform="translate(0.5,0.5) scale(0.59)"><path d="M17 28 L9.5 15.5 Q7.5 11 10.5 8.5 Q13.5 6 18 8.5 L29 15 L39 9 Q43.5 6.5 46.5 9 Q49.5 12 47 16 L40 28 L47 40 Q49.5 44.5 46.5 47.5 Q43.5 50 39 47.5 L28 41 L18 47 Q13.5 49.5 10.5 47 Q7.5 44 10 40 Z" fill="none" stroke="#cccccc" stroke-width="3.6" stroke-linejoin="round"/><path d="M28.5 23 L33.5 28 L28.5 33 L23.5 28 Z" fill="#cccccc"/></g></svg>
<svg class="a" style="left:2618px;top:164px;" width="32" height="32" viewBox="0 0 32 32"><path d="M2 29 L14 6 Q16.5 2 19 6 L29 23 Q31 29 25 29.5 Q19 30 16 26 Q13.5 22 17 19 L2 29" fill="none" stroke="#cccccc" stroke-width="1.8" stroke-linejoin="round"/><path d="M17 19 L22 29" stroke="#cccccc" stroke-width="1.6"/></svg>
<svg class="a" style="left:2668px;top:166px;" width="36" height="28" viewBox="0 0 36 28"><path d="M9 5 L2 14 L9 23 M27 5 L34 14 L27 23 M21 2 L15 26" fill="none" stroke="#cccccc" stroke-width="2.4" stroke-linejoin="round"/></svg>
<svg class="a" style="left:2722px;top:162px;" width="32" height="36" viewBox="0 0 32 36"><circle cx="6" cy="6" r="4" fill="none" stroke="#cccccc" stroke-width="2.2"/><circle cx="26" cy="30" r="4" fill="none" stroke="#cccccc" stroke-width="2.2"/><path d="M6 10 V28 Q6 31 9 31 H13 M10 27 L14 31 L10 35" fill="none" stroke="#cccccc" stroke-width="2.2"/><path d="M26 26 V8 Q26 5 23 5 H19 M22 1 L18 5 L22 9" fill="none" stroke="#cccccc" stroke-width="2.2"/></svg>
<svg class="a" style="left:2772px;top:160px;" width="36" height="38" viewBox="0 0 36 38"><path d="M3.5 26 V6 Q3.5 2.7 6.8 2.7 H21.5 Q24.5 2.7 24.5 5.7 V11.5" fill="none" stroke="#cccccc" stroke-width="2.2"/><rect x="3.5" y="3" width="21" height="4.5" rx="2" fill="#cccccc"/><rect x="12.6" y="12.8" width="21.4" height="21.6" rx="2.5" fill="none" stroke="#cccccc" stroke-width="2.4"/><rect x="12.6" y="12.8" width="21.4" height="6" rx="2" fill="#cccccc"/><path d="M12.6 24.5 H34 M12.6 29.5 H34 M22.8 18 V34" stroke="#cccccc" stroke-width="2"/></svg>
<svg class="a" style="left:2828px;top:166px;" width="30" height="28" viewBox="0 0 30 28"><rect x="1.5" y="1.5" width="27" height="25" rx="2.5" fill="none" stroke="#cccccc" stroke-width="2.2"/><path d="M15 1.5 V26.5" stroke="#cccccc" stroke-width="2.2"/></svg>
<div class="a" style="left:2882.5px;top:177px;width:4.5px;height:4.5px;border-radius:50%;background:#cccccc"></div>
<div class="a" style="left:2892.5px;top:177px;width:4.5px;height:4.5px;border-radius:50%;background:#cccccc"></div>
<div class="a" style="left:2902.5px;top:177px;width:4.5px;height:4.5px;border-radius:50%;background:#cccccc"></div>
<div id="t653ccca8" class="a t" style="left:656.4px;top:214.50px;font-size:26px;line-height:44px;color:#a9a9a9;font-weight:normal;letter-spacing:0.920px;font-family:"Liberation Sans",sans-serif;">models</div>
<svg class="a" style="left:753px;top:226px;" width="14" height="22" viewBox="0 0 14 22"><path d="M2.5 1.5 L11.5 11 L2.5 20.5" fill="none" stroke="#a9a9a9" stroke-width="2"/></svg>
<div id="ta72d68ab" class="a t" style="left:777px;top:214.50px;font-size:26px;line-height:44px;color:#a9a9a9;font-weight:normal;letter-spacing:1.000px;font-family:"Liberation Sans",sans-serif;">marts</div>
<svg class="a" style="left:854px;top:226px;" width="14" height="22" viewBox="0 0 14 22"><path d="M2.5 1.5 L11.5 11 L2.5 20.5" fill="none" stroke="#a9a9a9" stroke-width="2"/></svg>
<svg class="a" style="left:886px;top:224px;" width="22" height="24" viewBox="0 0 22 24"><g fill="#f0528a"><path d="M0 2.8 Q11 -1.2 22 2.8 V8.6 Q11 12.2 0 8.6 Z"/><path d="M0 10.6 Q11 14.2 22 10.6 V15.4 Q11 19 0 15.4 Z"/><path d="M0 17.4 Q11 21 22 17.4 V20.6 Q11 24 0 20.6 Z"/></g></svg>
<div id="t1c9aa688" class="a t" style="left:921.6px;top:214.50px;font-size:26px;line-height:44px;color:#bdbdbd;font-weight:normal;letter-spacing:0.848px;font-family:"Liberation Sans",sans-serif;">customers.sql</div>
<div class="a" style="left:784px;top:396px;width:2156px;height:36px;box-sizing:border-box;border:2px solid #282828;border-left:none;border-right:none"></div>
<div class="a" style="left:782.0px;top:396px;width:2px;height:36px;background:#8a8a8a;"></div>
<div class="a" style="left:782.0px;top:540px;width:2px;height:540px;background:#404040;"></div>
<div class="a" style="left:839.84px;top:612px;width:2px;height:324px;background:#404040;"></div>
<div class="a" style="left:782.0px;top:1224px;width:2px;height:108px;background:#404040;"></div>
<div class="a" style="left:839.84px;top:1296px;width:2px;height:36px;background:#404040;"></div>
<div class="a" style="left:724px;top:288px;width:6px;height:1040px;background:#38383d;"></div>
<div class="a t" style="left:600px;width:103.5px;text-align:right;top:288.5px;height:36px;font:24px/36px 'Liberation Mono',monospace;letter-spacing:0.06px;-webkit-text-stroke-width:0.3px;color:#6e7681">1</div>
<div class="a t" style="left:600px;width:103.5px;text-align:right;top:324.5px;height:36px;font:24px/36px 'Liberation Mono',monospace;letter-spacing:0.06px;-webkit-text-stroke-width:0.3px;color:#6e7681">2</div>
<div class="a t" style="left:600px;width:103.5px;text-align:right;top:360.5px;height:36px;font:24px/36px 'Liberation Mono',monospace;letter-spacing:0.06px;-webkit-text-stroke-width:0.3px;color:#6e7681">3</div>
<div class="a t" style="left:600px;width:103.5px;text-align:right;top:396.5px;height:36px;font:24px/36px 'Liberation Mono',monospace;letter-spacing:0.06px;-webkit-text-stroke-width:0.3px;color:#cccccc">4</div>
<div class="a t" style="left:600px;width:103.5px;text-align:right;top:432.5px;height:36px;font:24px/36px 'Liberation Mono',monospace;letter-spacing:0.06px;-webkit-text-stroke-width:0.3px;color:#6e7681">5</div>
<div class="a t" style="left:600px;width:103.5px;text-align:right;top:468.5px;height:36px;font:24px/36px 'Liberation Mono',monospace;letter-spacing:0.06px;-webkit-text-stroke-width:0.3px;color:#6e7681">6</div>
<div class="a t" style="left:600px;width:103.5px;text-align:right;top:504.5px;height:36px;font:24px/36px 'Liberation Mono',monospace;letter-spacing:0.06px;-webkit-text-stroke-width:0.3px;color:#6e7681">7</div>
<div class="a t" style="left:600px;width:103.5px;text-align:right;top:540.5px;height:36px;font:24px/36px 'Liberation Mono',monospace;letter-spacing:0.06px;-webkit-text-stroke-width:0.3px;color:#6e7681">8</div>
<div class="a t" style="left:600px;width:103.5px;text-align:right;top:576.5px;height:36px;font:24px/36px 'Liberation Mono',monospace;letter-spacing:0.06px;-webkit-text-stroke-width:0.3px;color:#6e7681">9</div>
<div class="a t" style="left:600px;width:103.5px;text-align:right;top:612.5px;height:36px;font:24px/36px 'Liberation Mono',monospace;letter-spacing:0.06px;-webkit-text-stroke-width:0.3px;color:#6e7681">10</div>
<div class="a t" style="left:600px;width:103.5px;text-align:right;top:648.5px;height:36px;font:24px/36px 'Liberation Mono',monospace;letter-spacing:0.06px;-webkit-text-stroke-width:0.3px;color:#6e7681">11</div>
<div class="a t" style="left:600px;width:103.5px;text-align:right;top:684.5px;height:36px;font:24px/36px 'Liberation Mono',monospace;letter-spacing:0.06px;-webkit-text-stroke-width:0.3px;color:#6e7681">12</div>
<div class="a t" style="left:600px;width:103.5px;text-align:right;top:720.5px;height:36px;font:24px/36px 'Liberation Mono',monospace;letter-spacing:0.06px;-webkit-text-stroke-width:0.3px;color:#6e7681">13</div>
<div class="a t" style="left:600px;width:103.5px;text-align:right;top:756.5px;height:36px;font:24px/36px 'Liberation Mono',monospace;letter-spacing:0.06px;-webkit-text-stroke-width:0.3px;color:#6e7681">14</div>
<div class="a t" style="left:600px;width:103.5px;text-align:right;top:792.5px;height:36px;font:24px/36px 'Liberation Mono',monospace;letter-spacing:0.06px;-webkit-text-stroke-width:0.3px;color:#6e7681">15</div>
<div class="a t" style="left:600px;width:103.5px;text-align:right;top:828.5px;height:36px;font:24px/36px 'Liberation Mono',monospace;letter-spacing:0.06px;-webkit-text-stroke-width:0.3px;color:#6e7681">16</div>
<div class="a t" style="left:600px;width:103.5px;text-align:right;top:864.5px;height:36px;font:24px/36px 'Liberation Mono',monospace;letter-spacing:0.06px;-webkit-text-stroke-width:0.3px;color:#6e7681">17</div>
<div class="a t" style="left:600px;width:103.5px;text-align:right;top:900.5px;height:36px;font:24px/36px 'Liberation Mono',monospace;letter-spacing:0.06px;-webkit-text-stroke-width:0.3px;color:#6e7681">18</div>
<div class="a t" style="left:600px;width:103.5px;text-align:right;top:936.5px;height:36px;font:24px/36px 'Liberation Mono',monospace;letter-spacing:0.06px;-webkit-text-stroke-width:0.3px;color:#6e7681">19</div>
<div class="a t" style="left:600px;width:103.5px;text-align:right;top:972.5px;height:36px;font:24px/36px 'Liberation Mono',monospace;letter-spacing:0.06px;-webkit-text-stroke-width:0.3px;color:#6e7681">20</div>
<div class="a t" style="left:600px;width:103.5px;text-align:right;top:1008.5px;height:36px;font:24px/36px 'Liberation Mono',monospace;letter-spacing:0.06px;-webkit-text-stroke-width:0.3px;color:#6e7681">21</div>
<div class="a t" style="left:600px;width:103.5px;text-align:right;top:1044.5px;height:36px;font:24px/36px 'Liberation Mono',monospace;letter-spacing:0.06px;-webkit-text-stroke-width:0.3px;color:#6e7681">22</div>
<div class="a t" style="left:600px;width:103.5px;text-align:right;top:1080.5px;height:36px;font:24px/36px 'Liberation Mono',monospace;letter-spacing:0.06px;-webkit-text-stroke-width:0.3px;color:#6e7681">23</div>
<div class="a t" style="left:600px;width:103.5px;text-align:right;top:1116.5px;height:36px;font:24px/36px 'Liberation Mono',monospace;letter-spacing:0.06px;-webkit-text-stroke-width:0.3px;color:#6e7681">24</div>
<div class="a t" style="left:600px;width:103.5px;text-align:right;top:1152.5px;height:36px;font:24px/36px 'Liberation Mono',monospace;letter-spacing:0.06px;-webkit-text-stroke-width:0.3px;color:#6e7681">25</div>
<div class="a t" style="left:600px;width:103.5px;text-align:right;top:1188.5px;height:36px;font:24px/36px 'Liberation Mono',monospace;letter-spacing:0.06px;-webkit-text-stroke-width:0.3px;color:#6e7681">26</div>
<div class="a t" style="left:600px;width:103.5px;text-align:right;top:1224.5px;height:36px;font:24px/36px 'Liberation Mono',monospace;letter-spacing:0.06px;-webkit-text-stroke-width:0.3px;color:#6e7681">27</div>
<div class="a t" style="left:600px;width:103.5px;text-align:right;top:1260.5px;height:36px;font:24px/36px 'Liberation Mono',monospace;letter-spacing:0.06px;-webkit-text-stroke-width:0.3px;color:#6e7681">28</div>
<div class="a t" style="left:600px;width:103.5px;text-align:right;top:1296.5px;height:36px;font:24px/36px 'Liberation Mono',monospace;letter-spacing:0.06px;-webkit-text-stroke-width:0.3px;color:#6e7681">29</div>
<div class="a" style="left:708px;top:396px;width:38px;height:36px;border-radius:6px;background:#38383d"></div>
<svg class="a" style="left:716px;top:403px;" width="22" height="22" viewBox="0 0 22 22"><path d="M11 0 V20 M1 10 H21" stroke="#e0e0e0" stroke-width="2"/></svg>
<div class="a" style="left:754px;top:396px;width:6px;height:72px;background:repeating-linear-gradient(135deg,#1f1f1f 0 2.2px,#1f7fd2 2.2px 4.3px)"></div>
<div class="a" style="left:1056.2px;top:396px;width:15.0px;height:36px;box-sizing:border-box;border:2px solid #6b6b6b"></div>
<div class="a" style="left:1085.2px;top:396px;width:15.0px;height:36px;box-sizing:border-box;border:2px solid #6b6b6b"></div>
<div class="a t" style="left:782px;top:288.2px;height:36px;font:24.8px/36px 'Liberation Mono',monospace;letter-spacing:-0.42px;-webkit-text-stroke-width:0.5px"><span style="color:#569cd6">with</span></div>
<div class="a t" style="left:782px;top:324.2px;height:36px;font:24.8px/36px 'Liberation Mono',monospace;letter-spacing:-0.42px;-webkit-text-stroke-width:0.5px"></div>
<div class="a t" style="left:782px;top:360.2px;height:36px;font:24.8px/36px 'Liberation Mono',monospace;letter-spacing:-0.42px;-webkit-text-stroke-width:0.5px"><span style="color:#d4d4d4">customers</span><span style="color:#d4d4d4"> </span><span style="color:#569cd6">as</span><span style="color:#d4d4d4"> </span><span style="color:#ffd700">(</span></div>
<div class="a t" style="left:782px;top:396.2px;height:36px;font:24.8px/36px 'Liberation Mono',monospace;letter-spacing:-0.42px;-webkit-text-stroke-width:0.5px"><span style="color:#d4d4d4">    </span><span style="color:#569cd6">select</span><span style="color:#d4d4d4"> </span><span style="color:#d4d4d4">*</span><span style="color:#d4d4d4"> </span><span style="color:#569cd6">from</span><span style="color:#d4d4d4"> </span><span style="color:#da70d6">{</span><span style="color:#179fff">{</span><span style="color:#d4d4d4"> </span><span style="color:#179fff">}</span><span style="color:#da70d6">}</span></div>
<div class="a t" style="left:782px;top:432.2px;height:36px;font:24.8px/36px 'Liberation Mono',monospace;letter-spacing:-0.42px;-webkit-text-stroke-width:0.5px"><span style="color:#ffd700">)</span></div>
<div class="a t" style="left:782px;top:468.2px;height:36px;font:24.8px/36px 'Liberation Mono',monospace;letter-spacing:-0.42px;-webkit-text-stroke-width:0.5px"></div>
<div class="a t" style="left:782px;top:504.2px;height:36px;font:24.8px/36px 'Liberation Mono',monospace;letter-spacing:-0.42px;-webkit-text-stroke-width:0.5px"><span style="color:#d4d4d4">customer_orders_summary</span><span style="color:#d4d4d4"> </span><span style="color:#569cd6">as</span><span style="color:#d4d4d4"> </span><span style="color:#ffd700">(</span></div>
<div class="a t" style="left:782px;top:540.2px;height:36px;font:24.8px/36px 'Liberation Mono',monospace;letter-spacing:-0.42px;-webkit-text-stroke-width:0.5px"></div>
<div class="a t" style="left:782px;top:576.2px;height:36px;font:24.8px/36px 'Liberation Mono',monospace;letter-spacing:-0.42px;-webkit-text-stroke-width:0.5px"><span style="color:#d4d4d4">    </span><span style="color:#569cd6">select</span></div>
<div class="a t" style="left:782px;top:612.2px;height:36px;font:24.8px/36px 'Liberation Mono',monospace;letter-spacing:-0.42px;-webkit-text-stroke-width:0.5px"><span style="color:#d4d4d4">        </span><span style="color:#d4d4d4">orders</span><span style="color:#d4d4d4">.</span><span style="color:#d4d4d4">customer_id</span><span style="color:#d4d4d4">,</span></div>
<div class="a t" style="left:782px;top:648.2px;height:36px;font:24.8px/36px 'Liberation Mono',monospace;letter-spacing:-0.42px;-webkit-text-stroke-width:0.5px"></div>
<div class="a t" style="left:782px;top:684.2px;height:36px;font:24.8px/36px 'Liberation Mono',monospace;letter-spacing:-0.42px;-webkit-text-stroke-width:0.5px"><span style="color:#d4d4d4">        </span><span style="color:#dcdcaa">count</span><span style="color:#da70d6">(</span><span style="color:#569cd6">distinct</span><span style="color:#d4d4d4"> </span><span style="color:#d4d4d4">orders</span><span style="color:#d4d4d4">.</span><span style="color:#d4d4d4">order_id</span><span style="color:#da70d6">)</span><span style="color:#d4d4d4"> </span><span style="color:#569cd6">as</span><span style="color:#d4d4d4"> </span><span style="color:#d4d4d4">count_lifetime_orders</span><span style="color:#d4d4d4">,</span></div>
<div class="a t" style="left:782px;top:720.2px;height:36px;font:24.8px/36px 'Liberation Mono',monospace;letter-spacing:-0.42px;-webkit-text-stroke-width:0.5px"><span style="color:#d4d4d4">        </span><span style="color:#dcdcaa">count</span><span style="color:#da70d6">(</span><span style="color:#569cd6">distinct</span><span style="color:#d4d4d4"> </span><span style="color:#d4d4d4">orders</span><span style="color:#d4d4d4">.</span><span style="color:#d4d4d4">order_id</span><span style="color:#da70d6">)</span><span style="color:#d4d4d4"> </span><span style="color:#d4d4d4">&gt;</span><span style="color:#d4d4d4"> </span><span style="color:#b5cea8">1</span><span style="color:#d4d4d4"> </span><span style="color:#569cd6">as</span><span style="color:#d4d4d4"> </span><span style="color:#d4d4d4">is_repeat_buyer</span><span style="color:#d4d4d4">,</span></div>
<div class="a t" style="left:782px;top:756.2px;height:36px;font:24.8px/36px 'Liberation Mono',monospace;letter-spacing:-0.42px;-webkit-text-stroke-width:0.5px"><span style="color:#d4d4d4">        </span><span style="color:#dcdcaa">min</span><span style="color:#da70d6">(</span><span style="color:#d4d4d4">orders</span><span style="color:#d4d4d4">.</span><span style="color:#d4d4d4">ordered_at</span><span style="color:#da70d6">)</span><span style="color:#d4d4d4"> </span><span style="color:#569cd6">as</span><span style="color:#d4d4d4"> </span><span style="color:#d4d4d4">first_ordered_at</span><span style="color:#d4d4d4">,</span></div>
<div class="a t" style="left:782px;top:792.2px;height:36px;font:24.8px/36px 'Liberation Mono',monospace;letter-spacing:-0.42px;-webkit-text-stroke-width:0.5px"><span style="color:#d4d4d4">        </span><span style="color:#dcdcaa">max</span><span style="color:#da70d6">(</span><span style="color:#d4d4d4">orders</span><span style="color:#d4d4d4">.</span><span style="color:#d4d4d4">ordered_at</span><span style="color:#da70d6">)</span><span style="color:#d4d4d4"> </span><span style="color:#569cd6">as</span><span style="color:#d4d4d4"> </span><span style="color:#d4d4d4">last_ordered_at</span><span style="color:#d4d4d4">,</span></div>
<div class="a t" style="left:782px;top:828.2px;height:36px;font:24.8px/36px 'Liberation Mono',monospace;letter-spacing:-0.42px;-webkit-text-stroke-width:0.5px"><span style="color:#d4d4d4">        </span><span style="color:#dcdcaa">sum</span><span style="color:#da70d6">(</span><span style="color:#d4d4d4">orders</span><span style="color:#d4d4d4">.</span><span style="color:#d4d4d4">subtotal</span><span style="color:#da70d6">)</span><span style="color:#d4d4d4"> </span><span style="color:#569cd6">as</span><span style="color:#d4d4d4"> </span><span style="color:#d4d4d4">lifetime_spend_pretax</span><span style="color:#d4d4d4">,</span></div>
<div class="a t" style="left:782px;top:864.2px;height:36px;font:24.8px/36px 'Liberation Mono',monospace;letter-spacing:-0.42px;-webkit-text-stroke-width:0.5px"><span style="color:#d4d4d4">        </span><span style="color:#dcdcaa">sum</span><span style="color:#da70d6">(</span><span style="color:#d4d4d4">orders</span><span style="color:#d4d4d4">.</span><span style="color:#d4d4d4">tax_paid</span><span style="color:#da70d6">)</span><span style="color:#d4d4d4"> </span><span style="color:#569cd6">as</span><span style="color:#d4d4d4"> </span><span style="color:#d4d4d4">lifetime_tax_paid</span><span style="color:#d4d4d4">,</span></div>
<div class="a t" style="left:782px;top:900.2px;height:36px;font:24.8px/36px 'Liberation Mono',monospace;letter-spacing:-0.42px;-webkit-text-stroke-width:0.5px"><span style="color:#d4d4d4">        </span><span style="color:#dcdcaa">sum</span><span style="color:#da70d6">(</span><span style="color:#d4d4d4">orders</span><span style="color:#d4d4d4">.</span><span style="color:#d4d4d4">order_total</span><span style="color:#da70d6">)</span><span style="color:#d4d4d4"> </span><span style="color:#569cd6">as</span><span style="color:#d4d4d4"> </span><span style="color:#d4d4d4">lifetime_spend</span></div>
<div class="a t" style="left:782px;top:936.2px;height:36px;font:24.8px/36px 'Liberation Mono',monospace;letter-spacing:-0.42px;-webkit-text-stroke-width:0.5px"></div>
<div class="a t" style="left:782px;top:972.2px;height:36px;font:24.8px/36px 'Liberation Mono',monospace;letter-spacing:-0.42px;-webkit-text-stroke-width:0.5px"><span style="color:#d4d4d4">    </span><span style="color:#569cd6">from</span><span style="color:#d4d4d4"> </span><span style="color:#d4d4d4">orders</span></div>
<div class="a t" style="left:782px;top:1008.2px;height:36px;font:24.8px/36px 'Liberation Mono',monospace;letter-spacing:-0.42px;-webkit-text-stroke-width:0.5px"></div>
<div class="a t" style="left:782px;top:1044.2px;height:36px;font:24.8px/36px 'Liberation Mono',monospace;letter-spacing:-0.42px;-webkit-text-stroke-width:0.5px"><span style="color:#d4d4d4">    </span><span style="color:#569cd6">group</span><span style="color:#d4d4d4"> </span><span style="color:#569cd6">by</span><span style="color:#d4d4d4"> </span><span style="color:#b5cea8">1</span></div>
<div class="a t" style="left:782px;top:1080.2px;height:36px;font:24.8px/36px 'Liberation Mono',monospace;letter-spacing:-0.42px;-webkit-text-stroke-width:0.5px"></div>
<div class="a t" style="left:782px;top:1116.2px;height:36px;font:24.8px/36px 'Liberation Mono',monospace;letter-spacing:-0.42px;-webkit-text-stroke-width:0.5px"><span style="color:#ffd700">)</span><span style="color:#d4d4d4">,</span></div>
<div class="a t" style="left:782px;top:1152.2px;height:36px;font:24.8px/36px 'Liberation Mono',monospace;letter-spacing:-0.42px;-webkit-text-stroke-width:0.5px"></div>
<div class="a t" style="left:782px;top:1188.2px;height:36px;font:24.8px/36px 'Liberation Mono',monospace;letter-spacing:-0.42px;-webkit-text-stroke-width:0.5px"><span style="color:#d4d4d4">joined</span><span style="color:#d4d4d4"> </span><span style="color:#569cd6">as</span><span style="color:#d4d4d4"> </span><span style="color:#ffd700">(</span></div>
<div class="a t" style="left:782px;top:1224.2px;height:36px;font:24.8px/36px 'Liberation Mono',monospace;letter-spacing:-0.42px;-webkit-text-stroke-width:0.5px"></div>
<div class="a t" style="left:782px;top:1260.2px;height:36px;font:24.8px/36px 'Liberation Mono',monospace;letter-spacing:-0.42px;-webkit-text-stroke-width:0.5px"><span style="color:#d4d4d4">    </span><span style="color:#569cd6">select</span></div>
<div class="a t" style="left:782px;top:1296.2px;height:36px;font:24.8px/36px 'Liberation Mono',monospace;letter-spacing:-0.42px;-webkit-text-stroke-width:0.5px"><span style="color:#d4d4d4">        </span><span style="color:#d4d4d4">customers</span><span style="color:#d4d4d4">.</span><span style="color:#d4d4d4">*</span><span style="color:#d4d4d4">,</span></div>
<div class="a" style="left:1084.66px;top:398px;width:3px;height:32px;background:#aeafad;"></div>
<div id="t3e9e32d6" class="a t" style="left:783.5px;top:254.50px;font-size:22px;line-height:36px;color:#999999;font-weight:normal;letter-spacing:-0.057px;font-family:"Liberation Sans",sans-serif;">··· | Add documentation or tests | Datapilot Notebooks</div>
<div class="a" style="left:2911px;top:258px;width:2px;height:1070px;background:#252525;"></div>
<div class="a" style="left:2912px;top:258px;width:28px;height:395px;background:rgba(121,121,121,0.4);"></div>
<div class="a" style="left:2913px;top:307px;width:27px;height:3px;background:#a0a0a0;"></div>
<div class="a" style="left:2913px;top:310px;width:9px;height:25px;background:#3d5f88;"></div>
<div class="a" style="left:2922px;top:310px;width:9px;height:12px;background:#9c9c9c;"></div>
<div id="t1ebe3cbb" class="a t" style="left:664.3px;top:1344.00px;font-size:22px;line-height:40px;color:#9d9d9d;font-weight:normal;letter-spacing:-0.373px;font-family:"Liberation Sans",sans-serif;">PROBLEMS</div>
<div id="t8160c077" class="a t" style="left:869.4px;top:1344.00px;font-size:22px;line-height:40px;color:#9d9d9d;font-weight:normal;letter-spacing:0.320px;font-family:"Liberation Sans",sans-serif;">OUTPUT</div>
<div id="t6ff21699" class="a t" style="left:1009.9px;top:1344.00px;font-size:22px;line-height:40px;color:#9d9d9d;font-weight:normal;letter-spacing:-0.227px;font-family:"Liberation Sans",sans-serif;">TERMINAL</div>
<div id="t48b828ee" class="a t" style="left:1168.5px;top:1344.00px;font-size:22px;line-height:40px;color:#9d9d9d;font-weight:normal;letter-spacing:-0.183px;font-family:"Liberation Sans",sans-serif;">DEBUG CONSOLE</div>
<div id="ted5a5c73" class="a t" style="left:1406.2px;top:1344.00px;font-size:22px;line-height:40px;color:#9d9d9d;font-weight:normal;letter-spacing:-0.300px;font-family:"Liberation Sans",sans-serif;">PORTS</div>
<div id="t201d5950" class="a t" style="left:1527.9px;top:1344.00px;font-size:22px;line-height:40px;color:#9d9d9d;font-weight:normal;letter-spacing:-0.333px;font-family:"Liberation Sans",sans-serif;">QUERY RESULTS</div>
<div id="t90967fd6" class="a t" style="left:1754.8px;top:1344.00px;font-size:22px;line-height:40px;color:#9d9d9d;font-weight:normal;letter-spacing:-0.466px;font-family:"Liberation Sans",sans-serif;">LINEAGE</div>
<div id="tb85871fb" class="a t" style="left:1895px;top:1344.00px;font-size:22px;line-height:40px;color:#9d9d9d;font-weight:normal;letter-spacing:-0.097px;font-family:"Liberation Sans",sans-serif;">DATAMATES</div>
<div id="t0b24ce43" class="a t" style="left:2073px;top:1344.00px;font-size:22px;line-height:40px;color:#9d9d9d;font-weight:normal;letter-spacing:0.053px;font-family:"Liberation Sans",sans-serif;">DOCUMENTATION EDITOR</div>
<div id="t3231eef2" class="a t" style="left:2401px;top:1344.00px;font-size:22px;line-height:40px;color:#9d9d9d;font-weight:normal;letter-spacing:-0.234px;font-family:"Liberation Sans",sans-serif;">GITLENS</div>
<div id="ta4b551bf" class="a t" style="left:2541.8px;top:1344.00px;font-size:22px;line-height:40px;color:#e7e7e7;font-weight:normal;letter-spacing:-0.200px;font-family:"Liberation Sans",sans-serif;">COMPARE</div>
<div class="a" style="left:792px;top:1347.5px;width:33px;height:33px;border-radius:50%;background:#0078d4;color:#fff;font:20px/33px 'Liberation Sans',sans-serif;text-align:center">8</div>
<div class="a" style="left:2538px;top:1384px;width:116px;height:2px;background:#0078d4;"></div>
<div class="a" style="left:2688.0px;top:1361.5px;width:5px;height:5px;border-radius:50%;background:#cccccc"></div>
<div class="a" style="left:2697.5px;top:1361.5px;width:5px;height:5px;border-radius:50%;background:#cccccc"></div>
<div class="a" style="left:2707.0px;top:1361.5px;width:5px;height:5px;border-radius:50%;background:#cccccc"></div>
<svg class="a" style="left:2829px;top:1351px;" width="26" height="26" viewBox="0 0 26 26"><path d="M1 8 V1 H8 M18 1 H25 V8 M25 18 V25 H18 M8 25 H1 V18" fill="none" stroke="#cccccc" stroke-width="2.2"/></svg>
<svg class="a" style="left:2884px;top:1355px;" width="20" height="20" viewBox="0 0 20 20"><path d="M1.5 1.5 L18.5 18.5 M18.5 1.5 L1.5 18.5" stroke="#cccccc" stroke-width="2.2"/></svg>
<svg class="a" style="left:1720px;top:1470px;" width="124" height="124" viewBox="0 0 124 124"><g fill="none" stroke="#9e9895" stroke-width="6.8"><circle cx="31" cy="31.7" r="13.6"/><circle cx="31" cy="94" r="13.6"/><circle cx="92.8" cy="94" r="13.6"/><path d="M31 45.3 V80.4"/><path d="M59 31.5 H80 Q92.8 31.5 92.8 44.3 V80.4" stroke-linejoin="round"/><path d="M73 17.5 L59 31.5 L73 45.5"/></g></svg>
<div id="tdc3b0445" class="a t" style="left:1782px;top:1602.60px;font-size:26px;line-height:40px;color:#cccccc;font-weight:bold;letter-spacing:-0.130px;transform:translateX(-50%);font-family:"Liberation Sans",sans-serif;">No changes to display</div>
<div id="t1bc1f258" class="a t" style="left:1782px;top:1658.60px;font-size:26px;line-height:40px;color:#9e9895;font-weight:normal;letter-spacing:0.771px;transform:translateX(-50%);font-family:"Liberation Sans",sans-serif;">Click the button below to compare</div>
<div class="a" style="left:1708px;top:1717px;width:148px;height:64px;border-radius:13px;background:#ffffff"></div>
<div id="tc0e8a2f6" class="a t" style="left:1782px;top:1730.00px;font-size:27px;line-height:40px;color:#111111;font-weight:normal;letter-spacing:0.167px;transform:translateX(-50%);font-family:"Liberation Sans",sans-serif;">Compare</div>
<div class="a" style="left:0px;top:1868px;width:68px;height:44px;background:#0078d4;"></div>
<svg class="a" style="left:20px;top:1872px;" width="28" height="34" viewBox="0 0 28 34"><path d="M5.2 13 L13.6 20.5 L5.2 28.9 M22 6.4 L14.7 13.5 L22 21" fill="none" stroke="#ffffff" stroke-width="2"/></svg>
<svg class="a" style="left:86px;top:1876px;" width="24" height="28" viewBox="0 0 24 28"><circle cx="5" cy="4.5" r="3.3" fill="none" stroke="#cccccc" stroke-width="2"/><circle cx="5" cy="23.5" r="3.3" fill="none" stroke="#cccccc" stroke-width="2"/><circle cx="19" cy="10" r="3.3" fill="none" stroke="#cccccc" stroke-width="2"/><path d="M5 8 V20 M19 13.3 Q19 19 9 20" fill="none" stroke="#cccccc" stroke-width="2"/></svg>
<div id="tc39c2b71" class="a t" style="left:119.7px;top:1871.00px;font-size:24px;line-height:40px;color:#cccccc;font-weight:normal;letter-spacing:1.017px;font-family:"Liberation Sans",sans-serif;">mwong-fusion*</div>
<svg class="a" style="left:303px;top:1876px;" width="30" height="28" viewBox="0 0 30 28"><path d="M4 12 Q6 4 15 4 Q22 4 25 10 M26 16 Q24 24 15 24 Q8 24 5 18" fill="none" stroke="#cccccc" stroke-width="2"/><path d="M25 3 V10 H18 M5 25 V18 H12" fill="none" stroke="#cccccc" stroke-width="2"/></svg>
<svg class="a" style="left:364px;top:1874px;" width="26" height="32" viewBox="0 0 26 32"><circle cx="5" cy="6" r="3.5" fill="none" stroke="#cccccc" stroke-width="2"/><circle cx="5" cy="25" r="3.5" fill="none" stroke="#cccccc" stroke-width="2"/><circle cx="20" cy="14" r="3.5" fill="none" stroke="#cccccc" stroke-width="2"/><path d="M5 9.5 V21.5 M13 1 V31 M20 17.5 Q20 22 13 23" fill="none" stroke="#cccccc" stroke-width="2"/></svg>
<svg class="a" style="left:423px;top:1874px;" width="28" height="30" viewBox="0 0 28 30"><path d="M9 20 L5 16 Q12 3 26 2 Q25 16 12 23 Z" fill="none" stroke="#cccccc" stroke-width="2" stroke-linejoin="round"/><circle cx="18" cy="10" r="2.2" fill="#cccccc"/><path d="M3 22 V28 H9" fill="none" stroke="#cccccc" stroke-width="2"/></svg>
<svg class="a" style="left:452px;top:1874px;" width="28" height="30" viewBox="0 0 28 30"><path d="M8 15 L14 21 Q18 25 22 21 L24 19 Q27 15 23 11 L17 5 Z" fill="none" stroke="#cccccc" stroke-width="2"/><path d="M2 28 L10 20 M20 8 L25 3 M23 12 L27 8" stroke="#cccccc" stroke-width="2"/></svg>
<div id="t029777fe" class="a t" style="left:486.7px;top:1871.00px;font-size:24px;line-height:40px;color:#cccccc;font-weight:normal;letter-spacing:1.023px;font-family:"Liberation Sans",sans-serif;">Launchpad</div>
<svg class="a" style="left:643px;top:1877px;" width="28" height="28" viewBox="0 0 28 28"><circle cx="13" cy="13" r="11.5" fill="none" stroke="#cccccc" stroke-width="2"/><path d="M8.5 8.5 L17.5 17.5 M17.5 8.5 L8.5 17.5" stroke="#cccccc" stroke-width="2"/></svg>
<div id="t7a755626" class="a t" style="left:679px;top:1871.00px;font-size:24px;line-height:40px;color:#cccccc;font-weight:normal;letter-spacing:0.000px;font-family:"Liberation Sans",sans-serif;">5</div>
<svg class="a" style="left:701px;top:1876px;" width="28" height="28" viewBox="0 0 28 28"><path d="M12.5 2 L24 24 H1 Z" fill="none" stroke="#cccccc" stroke-width="2" stroke-linejoin="round"/><path d="M12.5 9 V17" stroke="#cccccc" stroke-width="2.2"/><circle cx="12.5" cy="20.5" r="1.3" fill="#cccccc"/></svg>
<div id="t998fb545" class="a t" style="left:736.5px;top:1871.00px;font-size:24px;line-height:40px;color:#cccccc;font-weight:normal;letter-spacing:0.000px;font-family:"Liberation Sans",sans-serif;">3</div>
<svg class="a" style="left:784px;top:1878px;" width="24" height="22" viewBox="0 0 24 22"><path d="M1.5 11 L8 18.5 L22 2" fill="none" stroke="#cccccc" stroke-width="2.2"/></svg>
<div id="t62f02c5c" class="a t" style="left:817px;top:1871.00px;font-size:24px;line-height:40px;color:#cccccc;font-weight:normal;letter-spacing:1.286px;font-family:"Liberation Sans",sans-serif;">dbt core</div>
<svg class="a" style="left:943px;top:1876px;" width="30" height="28" viewBox="0 0 30 28"><path d="M4 12 Q6 4 15 4 Q22 4 25 10 M26 16 Q24 24 15 24 Q8 24 5 18" fill="none" stroke="#cccccc" stroke-width="2"/><path d="M25 3 V10 H18 M5 25 V18 H12" fill="none" stroke="#cccccc" stroke-width="2"/><path d="M6 2 L24 27" stroke="#cccccc" stroke-width="2"/></svg>
<div id="t325250d5" class="a t" style="left:979px;top:1871.00px;font-size:24px;line-height:40px;color:#cccccc;font-weight:normal;letter-spacing:0.850px;font-family:"Liberation Sans",sans-serif;">Defer</div>
<svg class="a" style="left:1072px;top:1875px;" width="28" height="28" viewBox="0 0 28 28"><g transform="scale(0.5)"><path d="M17 28 L9.5 15.5 Q7.5 11 10.5 8.5 Q13.5 6 18 8.5 L29 15 L39 9 Q43.5 6.5 46.5 9 Q49.5 12 47 16 L40 28 L47 40 Q49.5 44.5 46.5 47.5 Q43.5 50 39 47.5 L28 41 L18 47 Q13.5 49.5 10.5 47 Q7.5 44 10 40 Z" fill="none" stroke="#cccccc" stroke-width="4" stroke-linejoin="round"/><path d="M28.5 23 L33.5 28 L28.5 33 L23.5 28 Z" fill="#cccccc"/></g></svg>
<div id="tc3c82ba4" class="a t" style="left:1107.5px;top:1871.00px;font-size:24px;line-height:40px;color:#cccccc;font-weight:normal;letter-spacing:0.833px;font-family:"Liberation Sans",sans-serif;">dbt Extension</div>
<svg class="a" style="left:1654px;top:1875px;" width="20" height="30" viewBox="0 0 20 30"><rect x="6.2" y="3" width="8.3" height="5" rx="1" fill="#cccccc"/><rect x="6.2" y="22" width="8.3" height="5" rx="1" fill="#cccccc"/><circle cx="10.3" cy="14.8" r="7.9" fill="#181818" stroke="#cccccc" stroke-width="1.8"/><path d="M10 10.5 V16 H13" fill="none" stroke="#cccccc" stroke-width="1.8"/></svg>
<div id="t708c1ca9" class="a t" style="left:1685.8px;top:1871.00px;font-size:24px;line-height:40px;color:#cccccc;font-weight:normal;letter-spacing:0.455px;font-family:"Liberation Sans",sans-serif;">Blame Paused</div>
<div id="tf0bdd13f" class="a t" style="left:1877px;top:1871.00px;font-size:24px;line-height:40px;color:#cccccc;font-weight:normal;letter-spacing:0.818px;font-family:"Liberation Sans",sans-serif;">Ln 4, Col 22</div>
<div id="ta129b355" class="a t" style="left:2047px;top:1871.00px;font-size:24px;line-height:40px;color:#cccccc;font-weight:normal;letter-spacing:0.500px;font-family:"Liberation Sans",sans-serif;">Spaces: 4</div>
<div id="t12c961c1" class="a t" style="left:2190.5px;top:1871.00px;font-size:24px;line-height:40px;color:#cccccc;font-weight:normal;letter-spacing:1.500px;font-family:"Liberation Sans",sans-serif;">UTF-8</div>
<div id="tcc6e7179" class="a t" style="left:2295.7px;top:1871.00px;font-size:24px;line-height:40px;color:#cccccc;font-weight:normal;letter-spacing:-0.200px;font-family:"Liberation Sans",sans-serif;">LF</div>
<svg class="a" style="left:2357px;top:1877px;" width="26" height="26" viewBox="0 0 26 26"><path d="M2 6 Q8 1 15 2.5 Q23 5 24 14" fill="none" stroke="#cccccc" stroke-width="2.2" stroke-linecap="round"/></svg>
<div id="t9f9c6a3a" class="a t" style="left:2395.7px;top:1871.00px;font-size:24px;line-height:40px;color:#cccccc;font-weight:normal;letter-spacing:0.080px;font-family:"Liberation Sans",sans-serif;">MS SQL</div>
<div class="a" style="left:2501px;top:1870px;width:214px;height:42px;background:#3a3a3f;"></div>
<svg class="a" style="left:2519px;top:1876px;" width="32" height="28" viewBox="0 0 32 28"><ellipse cx="10.2" cy="7.6" rx="5.2" ry="5.8" fill="none" stroke="#d0d0d0" stroke-width="2.2"/><ellipse cx="22.1" cy="7.6" rx="5.2" ry="5.8" fill="none" stroke="#d0d0d0" stroke-width="2.2"/><path fill-rule="evenodd" fill="#d0d0d0" d="M5.5 12.5 L2.8 15 Q1.5 17 2 21 Q3 26 16 26 Q29 26 30 21 Q30.5 17 29.2 15 L26.5 12.5 V14 H5.5 Z M7.8 14.5 H24.6 V21.5 Q16 23.5 7.8 21.5 Z"/><rect x="12.5" y="16" width="2" height="5" rx="1" fill="#d0d0d0"/><rect x="18" y="16" width="2" height="5" rx="1" fill="#d0d0d0"/></svg>
<div id="t20b03380" class="a t" style="left:2557px;top:1871.00px;font-size:24px;line-height:40px;color:#cccccc;font-weight:normal;letter-spacing:0.691px;font-family:"Liberation Sans",sans-serif;">Finish Setup</div>
<svg class="a" style="left:2731px;top:1877px;" width="28" height="28" viewBox="0 0 28 28"><circle cx="13" cy="13" r="11.5" fill="none" stroke="#cccccc" stroke-width="2"/><path d="M5 21 L21 5" stroke="#cccccc" stroke-width="2"/></svg>
<div id="tda0b93b8" class="a t" style="left:2767px;top:1871.00px;font-size:24px;line-height:40px;color:#cccccc;font-weight:normal;letter-spacing:1.000px;font-family:"Liberation Sans",sans-serif;">Prettier</div>
<svg class="a" style="left:2884px;top:1876px;" width="24" height="30" viewBox="0 0 24 30"><path d="M3 22 H21 L19 19 V12 Q19 4 12 4 Q5 4 5 12 V19 Z" fill="none" stroke="#cccccc" stroke-width="2" stroke-linejoin="round"/><path d="M9 25 Q12 29 15 25" fill="none" stroke="#cccccc" stroke-width="2"/></svg>
</body></html>
